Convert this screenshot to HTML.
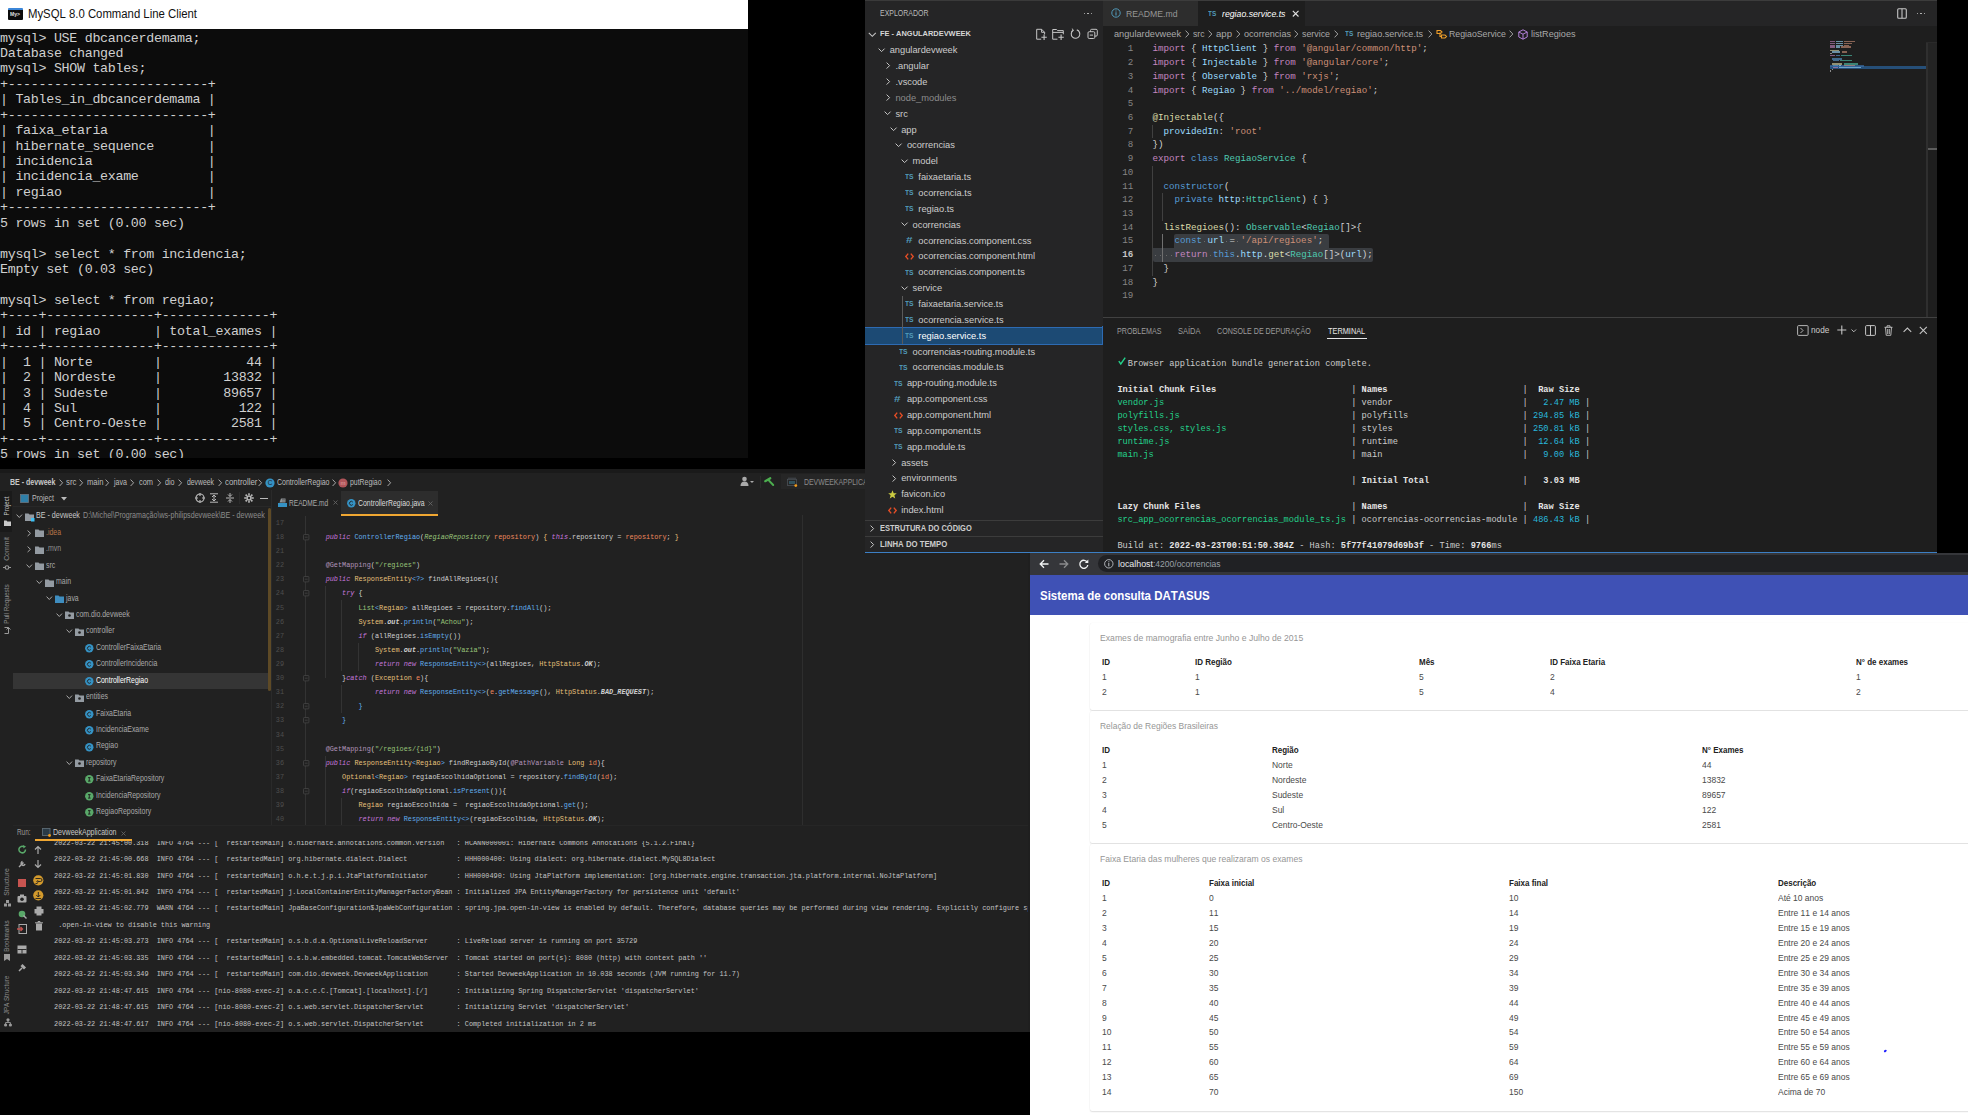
<!DOCTYPE html>
<html><head><meta charset="utf-8">
<style>
*{margin:0;padding:0;box-sizing:border-box}
html,body{width:1968px;height:1115px;overflow:hidden;background:#000}
body{position:relative;font-family:"Liberation Sans",sans-serif;font-kerning:none}
.a{position:absolute}
.t{white-space:pre}
pre{font-family:"Liberation Mono",monospace;white-space:pre;font-kerning:none}
svg{overflow:visible}
</style></head><body>
<div class="a" style="left:0.00px;top:0.00px;width:748.00px;height:29.00px;background:#fff;"></div>
<div class="a" style="left:8.00px;top:8.00px;width:15.00px;height:12.00px;background:#0c0c0c;border-top:2px solid #3b86d8;border-radius:1px"></div>
<div class="a t" style="left:10.00px;top:11.25px;font-size:5px;line-height:6.5px;color:#e0e0e0;font-weight:bold;transform:scaleX(1.0136);transform-origin:0 0;">My&gt;</div>
<div class="a t" style="left:28.00px;top:7.00px;font-size:12.3px;line-height:15.99px;color:#111;transform:scaleX(0.9224);transform-origin:0 0;">MySQL 8.0 Command Line Client</div>
<div class="a" style="left:0.00px;top:29.00px;width:748.00px;height:429.00px;background:#0c0c0c;"></div>
<div class="a" style="left:0;top:29px;width:748px;height:429px;overflow:hidden">
<pre class="a" style="left:0;top:1.5px;font-size:13.33px;letter-spacing:-0.3px;line-height:15.44px;color:#d0d0d0">mysql&gt; USE dbcancerdemama;
Database changed
mysql&gt; SHOW tables;
+--------------------------+
| Tables_in_dbcancerdemama |
+--------------------------+
| faixa_etaria             |
| hibernate_sequence       |
| incidencia               |
| incidencia_exame         |
| regiao                   |
+--------------------------+
5 rows in set (0.00 sec)

mysql&gt; select * from incidencia;
Empty set (0.03 sec)

mysql&gt; select * from regiao;
+----+--------------+--------------+
| id | regiao       | total_exames |
+----+--------------+--------------+
|  1 | Norte        |           44 |
|  2 | Nordeste     |        13832 |
|  3 | Sudeste      |        89657 |
|  4 | Sul          |          122 |
|  5 | Centro-Oeste |         2581 |
+----+--------------+--------------+
5 rows in set (0.00 sec)</pre>
</div>
<div class="a" style="left:0.00px;top:469.00px;width:865.00px;height:84.00px;background:#212121;"></div>
<div class="a" style="left:0.00px;top:553.00px;width:1030.00px;height:479.00px;background:#212121;"></div>
<div class="a" style="left:0.00px;top:469.00px;width:865.00px;height:4.00px;background:#1a1a1a;"></div>
<div class="a t" style="left:9.60px;top:477.05px;font-size:9.0px;line-height:11.7px;color:#c8c8c8;font-weight:bold;transform:scaleX(0.7824);transform-origin:0 0;">BE - devweek</div>
<div class="a t" style="left:66.00px;top:477.05px;font-size:9.0px;line-height:11.7px;color:#bbbbbb;transform:scaleX(0.8752);transform-origin:0 0;">src</div>
<div class="a t" style="left:86.50px;top:477.05px;font-size:9.0px;line-height:11.7px;color:#bbbbbb;transform:scaleX(0.8458);transform-origin:0 0;">main</div>
<div class="a t" style="left:113.50px;top:477.05px;font-size:9.0px;line-height:11.7px;color:#bbbbbb;transform:scaleX(0.7874);transform-origin:0 0;">java</div>
<div class="a t" style="left:138.50px;top:477.05px;font-size:9.0px;line-height:11.7px;color:#bbbbbb;transform:scaleX(0.8234);transform-origin:0 0;">com</div>
<div class="a t" style="left:164.50px;top:477.05px;font-size:9.0px;line-height:11.7px;color:#bbbbbb;transform:scaleX(0.7910);transform-origin:0 0;">dio</div>
<div class="a t" style="left:187.00px;top:477.05px;font-size:9.0px;line-height:11.7px;color:#bbbbbb;transform:scaleX(0.7601);transform-origin:0 0;">devweek</div>
<div class="a t" style="left:225.00px;top:477.05px;font-size:9.0px;line-height:11.7px;color:#bbbbbb;transform:scaleX(0.8780);transform-origin:0 0;">controller</div>
<svg class="a" style="left:58.5px;top:479.2px;" width="5" height="8" viewBox="0 0 5 8"><path d="M0.6 0.6 L3.6 3.8 L0.6 7" stroke="#a8a8a8" stroke-width="1" fill="none"/></svg>
<svg class="a" style="left:79px;top:479.2px;" width="5" height="8" viewBox="0 0 5 8"><path d="M0.6 0.6 L3.6 3.8 L0.6 7" stroke="#a8a8a8" stroke-width="1" fill="none"/></svg>
<svg class="a" style="left:104.5px;top:479.2px;" width="5" height="8" viewBox="0 0 5 8"><path d="M0.6 0.6 L3.6 3.8 L0.6 7" stroke="#a8a8a8" stroke-width="1" fill="none"/></svg>
<svg class="a" style="left:130px;top:479.2px;" width="5" height="8" viewBox="0 0 5 8"><path d="M0.6 0.6 L3.6 3.8 L0.6 7" stroke="#a8a8a8" stroke-width="1" fill="none"/></svg>
<svg class="a" style="left:156.5px;top:479.2px;" width="5" height="8" viewBox="0 0 5 8"><path d="M0.6 0.6 L3.6 3.8 L0.6 7" stroke="#a8a8a8" stroke-width="1" fill="none"/></svg>
<svg class="a" style="left:177.5px;top:479.2px;" width="5" height="8" viewBox="0 0 5 8"><path d="M0.6 0.6 L3.6 3.8 L0.6 7" stroke="#a8a8a8" stroke-width="1" fill="none"/></svg>
<svg class="a" style="left:217.5px;top:479.2px;" width="5" height="8" viewBox="0 0 5 8"><path d="M0.6 0.6 L3.6 3.8 L0.6 7" stroke="#a8a8a8" stroke-width="1" fill="none"/></svg>
<svg class="a" style="left:258px;top:479.2px;" width="5" height="8" viewBox="0 0 5 8"><path d="M0.6 0.6 L3.6 3.8 L0.6 7" stroke="#a8a8a8" stroke-width="1" fill="none"/></svg>
<svg class="a" style="left:332px;top:479.2px;" width="5" height="8" viewBox="0 0 5 8"><path d="M0.6 0.6 L3.6 3.8 L0.6 7" stroke="#a8a8a8" stroke-width="1" fill="none"/></svg>
<svg class="a" style="left:387px;top:479.2px;" width="5" height="8" viewBox="0 0 5 8"><path d="M0.6 0.6 L3.6 3.8 L0.6 7" stroke="#a8a8a8" stroke-width="1" fill="none"/></svg>
<svg class="a" style="left:265px;top:477.8px;" width="10" height="10" viewBox="0 0 10 10"><circle cx="5" cy="5" r="4.6" fill="#3592c4"/><text x="5" y="7.3" font-size="6.5" text-anchor="middle" fill="#1f1f1f" font-family="Liberation Sans">C</text></svg>
<div class="a t" style="left:276.50px;top:477.05px;font-size:9.0px;line-height:11.7px;color:#bbbbbb;transform:scaleX(0.7774);transform-origin:0 0;">ControllerRegiao</div>
<svg class="a" style="left:337.5px;top:477.8px;" width="10" height="10" viewBox="0 0 10 10"><circle cx="5" cy="5" r="4.6" fill="#b0555a"/><text x="5" y="7" font-size="6" text-anchor="middle" fill="#e0a8a8" font-family="Liberation Sans">m</text></svg>
<div class="a t" style="left:349.50px;top:477.05px;font-size:9.0px;line-height:11.7px;color:#bbbbbb;transform:scaleX(0.7677);transform-origin:0 0;">putRegiao</div>
<svg class="a" style="left:740px;top:476px;" width="14" height="11" viewBox="0 0 14 11"><circle cx="4.5" cy="3" r="2.3" fill="#aaa"/><path d="M0.5 10 Q0.5 5.5 4.5 5.5 Q8.5 5.5 8.5 10Z" fill="#aaa"/><path d="M10 5l2 2 2-2z" fill="#aaa"/></svg>
<div class="a" style="left:760.00px;top:476.00px;width:1.00px;height:12.00px;background:#2b2b2b;"></div>
<svg class="a" style="left:764px;top:476px;" width="12" height="11" viewBox="0 0 12 11"><path d="M1.2 5.2 L6.3 2.2" stroke="#4cae4f" stroke-width="2.2" stroke-linecap="round"/><path d="M4.8 4.4 L9.2 9" stroke="#4cae4f" stroke-width="2" stroke-linecap="round"/></svg>
<div class="a" style="left:781.00px;top:473.50px;width:84.00px;height:15.00px;background:#262626;"></div>
<svg class="a" style="left:786.5px;top:477px;" width="11" height="10" viewBox="0 0 11 10"><path d="M1 1.2h8" stroke="#4b5258" stroke-width="0.8"/><rect x="0.5" y="2.3" width="9" height="6.2" stroke="#4b5258" stroke-width="0.8" fill="none"/><rect x="2" y="4" width="6" height="3" fill="#31525e"/><circle cx="8.8" cy="8.6" r="1.4" fill="#f29b18"/></svg>
<div class="a t" style="left:804.00px;top:477.28px;font-size:8.5px;line-height:11.05px;color:#8c8c8c;transform:scaleX(0.8104);transform-origin:0 0;">DEVWEEKAPPLICATION</div>
<div class="a" style="left:0.00px;top:490.50px;width:12.00px;height:41.00px;background:#1a1a1a;"></div>
<div class="a t" style="left:7px;top:506px;width:23.65px;height:10px;font-size:7.6px;line-height:10px;color:#c8c8c8;transform:translate(-50%,-50%) rotate(-90deg) scaleX(0.795)">Project</div>
<div class="a t" style="left:7px;top:549px;width:26.18px;height:10px;font-size:7.6px;line-height:10px;color:#8c8c8c;transform:translate(-50%,-50%) rotate(-90deg) scaleX(0.905)">Commit</div>
<div class="a t" style="left:7px;top:604px;width:46.89px;height:10px;font-size:7.6px;line-height:10px;color:#8c8c8c;transform:translate(-50%,-50%) rotate(-90deg) scaleX(0.845)">Pull Requests</div>
<div class="a t" style="left:7px;top:881.6px;width:30.83px;height:10px;font-size:7.6px;line-height:10px;color:#8c8c8c;transform:translate(-50%,-50%) rotate(-90deg) scaleX(0.895)">Structure</div>
<div class="a t" style="left:7px;top:935.7px;width:38.01px;height:10px;font-size:7.6px;line-height:10px;color:#8c8c8c;transform:translate(-50%,-50%) rotate(-90deg) scaleX(0.829)">Bookmarks</div>
<div class="a t" style="left:7px;top:994.8px;width:46.88px;height:10px;font-size:7.6px;line-height:10px;color:#8c8c8c;transform:translate(-50%,-50%) rotate(-90deg) scaleX(0.821)">JPA Structure</div>
<svg class="a" style="left:3.5px;top:519.5px;" width="7" height="6" viewBox="0 0 7 6"><path d="M0 0.5h2.5l0.8 1h3.7v4.5h-7z" fill="#c8c8c8"/></svg>
<svg class="a" style="left:3px;top:563.5px;" width="8" height="7" viewBox="0 0 8 7"><circle cx="4" cy="3.5" r="1.8" stroke="#9a9a9a" stroke-width="1.1" fill="none"/><path d="M0 3.5h2.2M5.8 3.5h2.2" stroke="#9a9a9a" stroke-width="1.1"/></svg>
<svg class="a" style="left:3.5px;top:626.5px;" width="7" height="7" viewBox="0 0 7 7"><path d="M0.5 0.5h4v6M2.5 2.5l2-2 2 2M0.5 6.5h4" stroke="#9a9a9a" stroke-width="1" fill="none"/></svg>
<svg class="a" style="left:3.5px;top:899.5px;" width="7" height="7" viewBox="0 0 7 7"><rect x="0" y="3.5" width="3" height="3" fill="#9a9a9a"/><rect x="4" y="3.5" width="3" height="3" fill="#9a9a9a"/><rect x="2" y="0" width="3" height="3" fill="#9a9a9a"/></svg>
<svg class="a" style="left:4px;top:954px;" width="6" height="7" viewBox="0 0 6 7"><path d="M0 0h6v7l-3-2-3 2z" fill="#9a9a9a"/></svg>
<svg class="a" style="left:3.5px;top:1018px;" width="8" height="9" viewBox="0 0 8 9"><circle cx="4" cy="1.8" r="1.6" fill="#9a9a9a"/><circle cx="1.6" cy="7" r="1.6" fill="#9a9a9a"/><circle cx="6.4" cy="7" r="1.6" fill="#9a9a9a"/><path d="M4 2v2.5M1.6 7V4.5h4.8V7" stroke="#9a9a9a" stroke-width="0.9" fill="none"/></svg>
<div class="a" style="left:13.00px;top:490.00px;width:259.00px;height:16.00px;background:#212121;"></div>
<div class="a" style="left:13.00px;top:506.00px;width:259.00px;height:1.00px;background:#282828;"></div>
<svg class="a" style="left:20px;top:494px;" width="9" height="9" viewBox="0 0 9 9"><rect x="0.5" y="0.5" width="8" height="8" fill="#2f7fa8" stroke="#6a7680" stroke-width="0.8"/></svg>
<div class="a t" style="left:31.70px;top:493.08px;font-size:8.8px;line-height:11.44px;color:#bbbbbb;transform:scaleX(0.8033);transform-origin:0 0;">Project</div>
<svg class="a" style="left:61px;top:497px;" width="6" height="4" viewBox="0 0 6 4"><path d="M0 0h6l-3 3.5z" fill="#bbbbbb"/></svg>
<svg class="a" style="left:195px;top:493px;" width="10" height="10" viewBox="0 0 10 10"><circle cx="5" cy="5" r="4" stroke="#b8b8b8" stroke-width="1.2" fill="none"/><path d="M5 0v3M5 7v3M0 5h3M7 5h3" stroke="#b8b8b8" stroke-width="1.2"/></svg>
<svg class="a" style="left:210px;top:493px;" width="8" height="10" viewBox="0 0 8 10"><path d="M0 0.8h8M0 9.2h8M4 2v6M2 4l2-2 2 2M2 6l2 2 2-2" stroke="#b8b8b8" stroke-width="1" fill="none"/></svg>
<svg class="a" style="left:226px;top:493px;" width="8" height="10" viewBox="0 0 8 10"><path d="M0 5h8M4 0v3.5M4 6.5v3.5M2 1.5l2 2 2-2M2 8.5l2-2 2 2" stroke="#b8b8b8" stroke-width="1" fill="none"/></svg>
<div class="a" style="left:239.00px;top:492.00px;width:1.00px;height:12.00px;background:#2b2b2b;"></div>
<svg class="a" style="left:244px;top:493px;" width="10" height="10" viewBox="0 0 10 10"><circle cx="5" cy="5" r="2.8" fill="#b8b8b8"/><circle cx="5" cy="5" r="1.2" fill="#212121"/><path d="M8.00 5.00L9.80 5.00M7.12 7.12L8.39 8.39M5.00 8.00L5.00 9.80M2.88 7.12L1.61 8.39M2.00 5.00L0.20 5.00M2.88 2.88L1.61 1.61M5.00 2.00L5.00 0.20M7.12 2.88L8.39 1.61" stroke="#b8b8b8" stroke-width="1.6"/></svg>
<div class="a" style="left:260.00px;top:497.50px;width:8.00px;height:1.50px;background:#b8b8b8;"></div>
<div class="a" style="left:13.00px;top:672.90px;width:258.00px;height:16.50px;background:#353535;"></div>
<svg class="a" style="left:15.9px;top:514.3px;" width="7" height="5" viewBox="0 0 7 5"><path d="M0.6 0.6 L3.3 3.5 L6 0.6" stroke="#a8a8a8" stroke-width="1" fill="none"/></svg>
<svg class="a" style="left:24.9px;top:512.8px;" width="9" height="8" viewBox="0 0 9 8"><path d="M0 0.5h3.5l1 1h4.5v6.5h-9z" fill="#949ba2"/><rect x="6" y="5" width="3.5" height="3.5" fill="#3fc1f5"/></svg>
<div class="a t" style="left:35.90px;top:511.47px;font-size:8.2px;line-height:10.66px;color:#c8c8c8;transform:scaleX(0.8697);transform-origin:0 0;">BE - devweek</div>
<div class="a t" style="left:82.90px;top:511.47px;font-size:8.2px;line-height:10.66px;color:#8c8c8c;transform:scaleX(0.8700);transform-origin:0 0;">D:\Michel\Programação\ws-philipsdevweek\BE - devweek</div>
<svg class="a" style="left:26.8px;top:529.7299999999999px;" width="5" height="7" viewBox="0 0 5 7"><path d="M0.6 0.6 L3.5 3.3 L0.6 6" stroke="#a8a8a8" stroke-width="1" fill="none"/></svg>
<svg class="a" style="left:34.8px;top:529.2299999999999px;" width="9" height="8" viewBox="0 0 9 8"><path d="M0 0.5h3.5l1 1h4.5v6.5h-9z" fill="#949ba2"/></svg>
<div class="a t" style="left:45.85px;top:527.90px;font-size:8.2px;line-height:10.66px;color:#b87548;transform:scaleX(0.8476);transform-origin:0 0;">.idea</div>
<svg class="a" style="left:26.8px;top:546.16px;" width="5" height="7" viewBox="0 0 5 7"><path d="M0.6 0.6 L3.5 3.3 L0.6 6" stroke="#a8a8a8" stroke-width="1" fill="none"/></svg>
<svg class="a" style="left:34.8px;top:545.66px;" width="9" height="8" viewBox="0 0 9 8"><path d="M0 0.5h3.5l1 1h4.5v6.5h-9z" fill="#949ba2"/></svg>
<div class="a t" style="left:45.85px;top:544.33px;font-size:8.2px;line-height:10.66px;color:#8f8f8f;transform:scaleX(0.8476);transform-origin:0 0;">.mvn</div>
<svg class="a" style="left:25.8px;top:563.5899999999999px;" width="7" height="5" viewBox="0 0 7 5"><path d="M0.6 0.6 L3.3 3.5 L6 0.6" stroke="#a8a8a8" stroke-width="1" fill="none"/></svg>
<svg class="a" style="left:34.8px;top:562.0899999999999px;" width="9" height="8" viewBox="0 0 9 8"><path d="M0 0.5h3.5l1 1h4.5v6.5h-9z" fill="#949ba2"/></svg>
<div class="a t" style="left:45.85px;top:560.76px;font-size:8.2px;line-height:10.66px;color:#a9a9a9;transform:scaleX(0.8476);transform-origin:0 0;">src</div>
<svg class="a" style="left:35.8px;top:580.02px;" width="7" height="5" viewBox="0 0 7 5"><path d="M0.6 0.6 L3.3 3.5 L6 0.6" stroke="#a8a8a8" stroke-width="1" fill="none"/></svg>
<svg class="a" style="left:44.8px;top:578.52px;" width="9" height="8" viewBox="0 0 9 8"><path d="M0 0.5h3.5l1 1h4.5v6.5h-9z" fill="#949ba2"/></svg>
<div class="a t" style="left:55.80px;top:577.19px;font-size:8.2px;line-height:10.66px;color:#a9a9a9;transform:scaleX(0.8476);transform-origin:0 0;">main</div>
<svg class="a" style="left:45.8px;top:596.4499999999999px;" width="7" height="5" viewBox="0 0 7 5"><path d="M0.6 0.6 L3.3 3.5 L6 0.6" stroke="#a8a8a8" stroke-width="1" fill="none"/></svg>
<svg class="a" style="left:54.8px;top:594.9499999999999px;" width="9" height="8" viewBox="0 0 9 8"><path d="M0 0.5h3.5l1 1h4.5v6.5h-9z" fill="#3f8dbf"/></svg>
<div class="a t" style="left:65.75px;top:593.62px;font-size:8.2px;line-height:10.66px;color:#a9a9a9;transform:scaleX(0.8476);transform-origin:0 0;">java</div>
<svg class="a" style="left:55.7px;top:612.88px;" width="7" height="5" viewBox="0 0 7 5"><path d="M0.6 0.6 L3.3 3.5 L6 0.6" stroke="#a8a8a8" stroke-width="1" fill="none"/></svg>
<svg class="a" style="left:64.7px;top:611.38px;" width="9" height="8" viewBox="0 0 9 8"><path d="M0 0.5h3.5l1 1h4.5v6.5h-9z" fill="#949ba2"/><circle cx="4.5" cy="4.5" r="1.3" fill="#1f1f1f"/></svg>
<div class="a t" style="left:75.70px;top:610.05px;font-size:8.2px;line-height:10.66px;color:#a9a9a9;transform:scaleX(0.8476);transform-origin:0 0;">com.dio.devweek</div>
<svg class="a" style="left:65.7px;top:629.31px;" width="7" height="5" viewBox="0 0 7 5"><path d="M0.6 0.6 L3.3 3.5 L6 0.6" stroke="#a8a8a8" stroke-width="1" fill="none"/></svg>
<svg class="a" style="left:74.7px;top:627.81px;" width="9" height="8" viewBox="0 0 9 8"><path d="M0 0.5h3.5l1 1h4.5v6.5h-9z" fill="#949ba2"/><circle cx="4.5" cy="4.5" r="1.3" fill="#1f1f1f"/></svg>
<div class="a t" style="left:85.65px;top:626.48px;font-size:8.2px;line-height:10.66px;color:#a9a9a9;transform:scaleX(0.8476);transform-origin:0 0;">controller</div>
<svg class="a" style="left:84.9px;top:643.94px;" width="9" height="9" viewBox="0 0 9 9"><circle cx="4.3" cy="4.3" r="4.2" fill="#3592c4"/><path d="M5.8 3.1 A1.9 1.9 0 1 0 5.8 5.5" stroke="#1f1f1f" stroke-width="0.9" fill="none"/></svg>
<div class="a t" style="left:95.60px;top:642.91px;font-size:8.2px;line-height:10.66px;color:#a9a9a9;transform:scaleX(0.8476);transform-origin:0 0;">ControllerFaixaEtaria</div>
<svg class="a" style="left:84.9px;top:660.37px;" width="9" height="9" viewBox="0 0 9 9"><circle cx="4.3" cy="4.3" r="4.2" fill="#3592c4"/><path d="M5.8 3.1 A1.9 1.9 0 1 0 5.8 5.5" stroke="#1f1f1f" stroke-width="0.9" fill="none"/></svg>
<div class="a t" style="left:95.60px;top:659.34px;font-size:8.2px;line-height:10.66px;color:#a9a9a9;transform:scaleX(0.8476);transform-origin:0 0;">ControllerIncidencia</div>
<svg class="a" style="left:84.9px;top:676.8px;" width="9" height="9" viewBox="0 0 9 9"><circle cx="4.3" cy="4.3" r="4.2" fill="#3592c4"/><path d="M5.8 3.1 A1.9 1.9 0 1 0 5.8 5.5" stroke="#1f1f1f" stroke-width="0.9" fill="none"/></svg>
<div class="a t" style="left:95.60px;top:675.77px;font-size:8.2px;line-height:10.66px;color:#ffffff;transform:scaleX(0.8476);transform-origin:0 0;">ControllerRegiao</div>
<svg class="a" style="left:65.7px;top:695.03px;" width="7" height="5" viewBox="0 0 7 5"><path d="M0.6 0.6 L3.3 3.5 L6 0.6" stroke="#a8a8a8" stroke-width="1" fill="none"/></svg>
<svg class="a" style="left:74.7px;top:693.53px;" width="9" height="8" viewBox="0 0 9 8"><path d="M0 0.5h3.5l1 1h4.5v6.5h-9z" fill="#949ba2"/><circle cx="4.5" cy="4.5" r="1.3" fill="#1f1f1f"/></svg>
<div class="a t" style="left:85.65px;top:692.20px;font-size:8.2px;line-height:10.66px;color:#a9a9a9;transform:scaleX(0.8476);transform-origin:0 0;">entities</div>
<svg class="a" style="left:84.9px;top:709.66px;" width="9" height="9" viewBox="0 0 9 9"><circle cx="4.3" cy="4.3" r="4.2" fill="#3592c4"/><path d="M5.8 3.1 A1.9 1.9 0 1 0 5.8 5.5" stroke="#1f1f1f" stroke-width="0.9" fill="none"/></svg>
<div class="a t" style="left:95.60px;top:708.63px;font-size:8.2px;line-height:10.66px;color:#a9a9a9;transform:scaleX(0.8476);transform-origin:0 0;">FaixaEtaria</div>
<svg class="a" style="left:84.9px;top:726.09px;" width="9" height="9" viewBox="0 0 9 9"><circle cx="4.3" cy="4.3" r="4.2" fill="#3592c4"/><path d="M5.8 3.1 A1.9 1.9 0 1 0 5.8 5.5" stroke="#1f1f1f" stroke-width="0.9" fill="none"/></svg>
<div class="a t" style="left:95.60px;top:725.06px;font-size:8.2px;line-height:10.66px;color:#a9a9a9;transform:scaleX(0.8476);transform-origin:0 0;">IncidenciaExame</div>
<svg class="a" style="left:84.9px;top:742.52px;" width="9" height="9" viewBox="0 0 9 9"><circle cx="4.3" cy="4.3" r="4.2" fill="#3592c4"/><path d="M5.8 3.1 A1.9 1.9 0 1 0 5.8 5.5" stroke="#1f1f1f" stroke-width="0.9" fill="none"/></svg>
<div class="a t" style="left:95.60px;top:741.49px;font-size:8.2px;line-height:10.66px;color:#a9a9a9;transform:scaleX(0.8476);transform-origin:0 0;">Regiao</div>
<svg class="a" style="left:65.7px;top:760.75px;" width="7" height="5" viewBox="0 0 7 5"><path d="M0.6 0.6 L3.3 3.5 L6 0.6" stroke="#a8a8a8" stroke-width="1" fill="none"/></svg>
<svg class="a" style="left:74.7px;top:759.25px;" width="9" height="8" viewBox="0 0 9 8"><path d="M0 0.5h3.5l1 1h4.5v6.5h-9z" fill="#949ba2"/><circle cx="4.5" cy="4.5" r="1.3" fill="#1f1f1f"/></svg>
<div class="a t" style="left:85.65px;top:757.92px;font-size:8.2px;line-height:10.66px;color:#a9a9a9;transform:scaleX(0.8476);transform-origin:0 0;">repository</div>
<svg class="a" style="left:84.9px;top:775.38px;" width="9" height="9" viewBox="0 0 9 9"><circle cx="4.3" cy="4.3" r="4.2" fill="#59a869"/><path d="M3 2.6h2.6M4.3 2.6v3.5M3 6.1h2.6" stroke="#1f1f1f" stroke-width="0.9"/></svg>
<div class="a t" style="left:95.60px;top:774.35px;font-size:8.2px;line-height:10.66px;color:#a9a9a9;transform:scaleX(0.8476);transform-origin:0 0;">FaixaEtariaRepository</div>
<svg class="a" style="left:84.9px;top:791.81px;" width="9" height="9" viewBox="0 0 9 9"><circle cx="4.3" cy="4.3" r="4.2" fill="#59a869"/><path d="M3 2.6h2.6M4.3 2.6v3.5M3 6.1h2.6" stroke="#1f1f1f" stroke-width="0.9"/></svg>
<div class="a t" style="left:95.60px;top:790.78px;font-size:8.2px;line-height:10.66px;color:#a9a9a9;transform:scaleX(0.8476);transform-origin:0 0;">IncidenciaRepository</div>
<svg class="a" style="left:84.9px;top:808.24px;" width="9" height="9" viewBox="0 0 9 9"><circle cx="4.3" cy="4.3" r="4.2" fill="#59a869"/><path d="M3 2.6h2.6M4.3 2.6v3.5M3 6.1h2.6" stroke="#1f1f1f" stroke-width="0.9"/></svg>
<div class="a t" style="left:95.60px;top:807.21px;font-size:8.2px;line-height:10.66px;color:#a9a9a9;transform:scaleX(0.8476);transform-origin:0 0;">RegiaoRepository</div>
<div class="a" style="left:267.50px;top:508.00px;width:3.50px;height:183.00px;background:#5e4a26;border-radius:2px"></div>
<div class="a" style="left:271.00px;top:490.00px;width:1.00px;height:335.00px;background:#2a2a2a;"></div>
<div class="a" style="left:272.00px;top:490.00px;width:593.00px;height:25.00px;background:#212121;"></div>
<svg class="a" style="left:278px;top:497px;" width="10" height="11" viewBox="0 0 10 11"><rect x="0" y="6" width="9" height="4" fill="#3592c4"/><path d="M1.5 5.5L3 1.5h4.5v4" fill="#8f9497"/><path d="M4 2.5h3M4 4h3" stroke="#444" stroke-width="0.5"/></svg>
<div class="a t" style="left:289.00px;top:498.25px;font-size:9.0px;line-height:11.7px;color:#a8a8a8;transform:scaleX(0.7326);transform-origin:0 0;">README.md</div>
<svg class="a" style="left:333px;top:499.5px;" width="5" height="5" viewBox="0 0 5 5"><path d="M0.5 0.5l4 4M4.5 0.5l-4 4" stroke="#6a6a6a" stroke-width="0.8"/></svg>
<div class="a" style="left:341.20px;top:491.00px;width:96.80px;height:22.80px;background:#2d2d2d;"></div>
<div class="a" style="left:341.20px;top:513.80px;width:96.80px;height:2.00px;background:#f0a732;"></div>
<svg class="a" style="left:346.5px;top:498.5px;" width="9" height="9" viewBox="0 0 9 9"><circle cx="4.3" cy="4.3" r="4.2" fill="#3592c4"/><path d="M5.8 3.1 A1.9 1.9 0 1 0 5.8 5.5" stroke="#1f1f1f" stroke-width="0.9" fill="none"/></svg>
<div class="a t" style="left:357.60px;top:498.25px;font-size:9.0px;line-height:11.7px;color:#dcdcdc;transform:scaleX(0.7695);transform-origin:0 0;">ControllerRegiao.java</div>
<svg class="a" style="left:428px;top:500.5px;" width="5" height="5" viewBox="0 0 5 5"><path d="M0.5 0.5l4 4M4.5 0.5l-4 4" stroke="#6a6a6a" stroke-width="0.8"/></svg>
<div class="a" style="left:305.30px;top:515.50px;width:1.00px;height:310.00px;background:#333333;"></div>
<div class="a" style="left:324.64px;top:586.34px;width:1.00px;height:91.78px;background:#333333;"></div>
<div class="a" style="left:341.08px;top:600.46px;width:1.00px;height:70.60px;background:#333333;"></div>
<div class="a" style="left:357.52px;top:642.82px;width:1.00px;height:28.24px;background:#333333;"></div>
<div class="a" style="left:341.08px;top:685.18px;width:1.00px;height:28.24px;background:#333333;"></div>
<div class="a" style="left:324.64px;top:755.78px;width:1.00px;height:70.60px;background:#333333;"></div>
<div class="a" style="left:341.08px;top:798.14px;width:1.00px;height:28.24px;background:#333333;"></div>
<div class="a t" style="left:275.8px;top:515.80px;font:6.85px/14px 'Liberation Mono',monospace;color:#4e4e4e">17</div>
<div class="a t" style="left:275.8px;top:529.92px;font:6.85px/14px 'Liberation Mono',monospace;color:#4e4e4e">18</div>
<svg class="a" style="left:302.8px;top:533.92px;" width="7" height="7" viewBox="0 0 7 7"><rect x="0.5" y="0.5" width="5.4" height="5.4" rx="0.8" stroke="#4a4a4a" stroke-width="0.7" fill="#212121"/><path d="M1.8 3.2h2.8" stroke="#4a4a4a" stroke-width="0.7"/></svg>
<div class="a t" style="left:309.2px;top:529.92px;font:6.85px/14px 'Liberation Mono',monospace"><span style="color:#d0d0d0">    </span><span style="color:#c678dd;font-style:italic">public</span><span style="color:#d0d0d0"> </span><span style="color:#61afef">ControllerRegiao</span><span style="color:#d0d0d0">(</span><span style="color:#98c379;font-style:italic">RegiaoRepository</span><span style="color:#d0d0d0"> </span><span style="color:#ef8a5e">repository</span><span style="color:#d0d0d0">) </span><span style="color:#e5c07b">{</span><span style="color:#d0d0d0"> </span><span style="color:#c678dd;font-style:italic">this</span><span style="color:#d0d0d0">.repository = </span><span style="color:#ef8a5e">repository</span><span style="color:#d0d0d0">; </span><span style="color:#e5c07b">}</span></div>
<div class="a t" style="left:275.8px;top:544.04px;font:6.85px/14px 'Liberation Mono',monospace;color:#4e4e4e">21</div>
<div class="a t" style="left:275.8px;top:558.16px;font:6.85px/14px 'Liberation Mono',monospace;color:#4e4e4e">22</div>
<div class="a t" style="left:309.2px;top:558.16px;font:6.85px/14px 'Liberation Mono',monospace"><span style="color:#d0d0d0">    </span><span style="color:#b294bb">@GetMapping</span><span style="color:#d0d0d0">(</span><span style="color:#98c379">"/regioes"</span><span style="color:#d0d0d0">)</span></div>
<div class="a t" style="left:275.8px;top:572.28px;font:6.85px/14px 'Liberation Mono',monospace;color:#4e4e4e">23</div>
<svg class="a" style="left:302.8px;top:576.28px;" width="7" height="7" viewBox="0 0 7 7"><rect x="0.5" y="0.5" width="5.4" height="5.4" rx="0.8" stroke="#4a4a4a" stroke-width="0.7" fill="#212121"/><path d="M1.8 3.2h2.8" stroke="#4a4a4a" stroke-width="0.7"/></svg>
<div class="a t" style="left:309.2px;top:572.28px;font:6.85px/14px 'Liberation Mono',monospace"><span style="color:#d0d0d0">    </span><span style="color:#c678dd;font-style:italic">public</span><span style="color:#d0d0d0"> </span><span style="color:#e5c07b">ResponseEntity</span><span style="color:#61afef">&lt;?&gt;</span><span style="color:#d0d0d0"> findAllRegioes(){</span></div>
<div class="a t" style="left:275.8px;top:586.40px;font:6.85px/14px 'Liberation Mono',monospace;color:#4e4e4e">24</div>
<svg class="a" style="left:302.8px;top:590.4px;" width="7" height="7" viewBox="0 0 7 7"><rect x="0.5" y="0.5" width="5.4" height="5.4" rx="0.8" stroke="#4a4a4a" stroke-width="0.7" fill="#212121"/><path d="M1.8 3.2h2.8" stroke="#4a4a4a" stroke-width="0.7"/></svg>
<div class="a t" style="left:309.2px;top:586.40px;font:6.85px/14px 'Liberation Mono',monospace"><span style="color:#d0d0d0">        </span><span style="color:#c678dd;font-style:italic">try</span><span style="color:#d0d0d0"> {</span></div>
<div class="a t" style="left:275.8px;top:600.52px;font:6.85px/14px 'Liberation Mono',monospace;color:#4e4e4e">25</div>
<div class="a t" style="left:309.2px;top:600.52px;font:6.85px/14px 'Liberation Mono',monospace"><span style="color:#d0d0d0">            </span><span style="color:#98c379">List</span><span style="color:#61afef">&lt;</span><span style="color:#e5c07b">Regiao</span><span style="color:#61afef">&gt;</span><span style="color:#d0d0d0"> allRegioes = repository.</span><span style="color:#61afef">findAll</span><span style="color:#d0d0d0">();</span></div>
<div class="a t" style="left:275.8px;top:614.64px;font:6.85px/14px 'Liberation Mono',monospace;color:#4e4e4e">26</div>
<div class="a t" style="left:309.2px;top:614.64px;font:6.85px/14px 'Liberation Mono',monospace"><span style="color:#d0d0d0">            </span><span style="color:#e5c07b">System</span><span style="color:#d0d0d0">.</span><span style="color:#d0d0d0;font-style:italic;font-weight:bold">out</span><span style="color:#d0d0d0">.</span><span style="color:#61afef">println</span><span style="color:#d0d0d0">(</span><span style="color:#98c379">"Achou"</span><span style="color:#d0d0d0">);</span></div>
<div class="a t" style="left:275.8px;top:628.76px;font:6.85px/14px 'Liberation Mono',monospace;color:#4e4e4e">27</div>
<div class="a t" style="left:309.2px;top:628.76px;font:6.85px/14px 'Liberation Mono',monospace"><span style="color:#d0d0d0">            </span><span style="color:#c678dd;font-style:italic">if</span><span style="color:#d0d0d0"> (allRegioes.</span><span style="color:#61afef">isEmpty</span><span style="color:#d0d0d0">())</span></div>
<div class="a t" style="left:275.8px;top:642.88px;font:6.85px/14px 'Liberation Mono',monospace;color:#4e4e4e">28</div>
<div class="a t" style="left:309.2px;top:642.88px;font:6.85px/14px 'Liberation Mono',monospace"><span style="color:#d0d0d0">                </span><span style="color:#e5c07b">System</span><span style="color:#d0d0d0">.</span><span style="color:#d0d0d0;font-style:italic;font-weight:bold">out</span><span style="color:#d0d0d0">.</span><span style="color:#61afef">println</span><span style="color:#d0d0d0">(</span><span style="color:#98c379">"Vazia"</span><span style="color:#d0d0d0">);</span></div>
<div class="a t" style="left:275.8px;top:657.00px;font:6.85px/14px 'Liberation Mono',monospace;color:#4e4e4e">29</div>
<div class="a t" style="left:309.2px;top:657.00px;font:6.85px/14px 'Liberation Mono',monospace"><span style="color:#d0d0d0">                </span><span style="color:#c678dd;font-style:italic">return</span><span style="color:#d0d0d0"> </span><span style="color:#c678dd;font-style:italic">new</span><span style="color:#d0d0d0"> </span><span style="color:#61afef">ResponseEntity</span><span style="color:#61afef">&lt;&gt;</span><span style="color:#d0d0d0">(allRegioes, </span><span style="color:#e5c07b">HttpStatus</span><span style="color:#d0d0d0">.</span><span style="color:#d0d0d0;font-style:italic;font-weight:bold">OK</span><span style="color:#d0d0d0">);</span></div>
<div class="a t" style="left:275.8px;top:671.12px;font:6.85px/14px 'Liberation Mono',monospace;color:#4e4e4e">30</div>
<svg class="a" style="left:302.8px;top:675.1199999999999px;" width="7" height="7" viewBox="0 0 7 7"><rect x="0.5" y="0.5" width="5.4" height="5.4" rx="0.8" stroke="#4a4a4a" stroke-width="0.7" fill="#212121"/><path d="M1.8 3.2h2.8" stroke="#4a4a4a" stroke-width="0.7"/></svg>
<div class="a t" style="left:309.2px;top:671.12px;font:6.85px/14px 'Liberation Mono',monospace"><span style="color:#d0d0d0">        }</span><span style="color:#c678dd;font-style:italic">catch</span><span style="color:#d0d0d0"> (</span><span style="color:#e5c07b">Exception</span><span style="color:#d0d0d0"> </span><span style="color:#ef8a5e">e</span><span style="color:#d0d0d0">){</span></div>
<div class="a t" style="left:275.8px;top:685.24px;font:6.85px/14px 'Liberation Mono',monospace;color:#4e4e4e">31</div>
<div class="a t" style="left:309.2px;top:685.24px;font:6.85px/14px 'Liberation Mono',monospace"><span style="color:#d0d0d0">                </span><span style="color:#c678dd;font-style:italic">return</span><span style="color:#d0d0d0"> </span><span style="color:#c678dd;font-style:italic">new</span><span style="color:#d0d0d0"> </span><span style="color:#61afef">ResponseEntity</span><span style="color:#61afef">&lt;&gt;</span><span style="color:#d0d0d0">(</span><span style="color:#ef8a5e">e</span><span style="color:#d0d0d0">.</span><span style="color:#61afef">getMessage</span><span style="color:#d0d0d0">(), </span><span style="color:#e5c07b">HttpStatus</span><span style="color:#d0d0d0">.</span><span style="color:#d0d0d0;font-style:italic;font-weight:bold">BAD_REQUEST</span><span style="color:#d0d0d0">);</span></div>
<div class="a t" style="left:275.8px;top:699.36px;font:6.85px/14px 'Liberation Mono',monospace;color:#4e4e4e">32</div>
<svg class="a" style="left:302.8px;top:703.3599999999999px;" width="7" height="7" viewBox="0 0 7 7"><rect x="0.5" y="0.5" width="5.4" height="5.4" rx="0.8" stroke="#4a4a4a" stroke-width="0.7" fill="#212121"/><path d="M1.8 3.2h2.8" stroke="#4a4a4a" stroke-width="0.7"/></svg>
<div class="a t" style="left:309.2px;top:699.36px;font:6.85px/14px 'Liberation Mono',monospace"><span style="color:#61afef">            }</span></div>
<div class="a t" style="left:275.8px;top:713.48px;font:6.85px/14px 'Liberation Mono',monospace;color:#4e4e4e">33</div>
<svg class="a" style="left:302.8px;top:717.4799999999999px;" width="7" height="7" viewBox="0 0 7 7"><rect x="0.5" y="0.5" width="5.4" height="5.4" rx="0.8" stroke="#4a4a4a" stroke-width="0.7" fill="#212121"/><path d="M1.8 3.2h2.8" stroke="#4a4a4a" stroke-width="0.7"/></svg>
<div class="a t" style="left:309.2px;top:713.48px;font:6.85px/14px 'Liberation Mono',monospace"><span style="color:#61afef">        }</span></div>
<div class="a t" style="left:275.8px;top:727.60px;font:6.85px/14px 'Liberation Mono',monospace;color:#4e4e4e">34</div>
<div class="a t" style="left:275.8px;top:741.72px;font:6.85px/14px 'Liberation Mono',monospace;color:#4e4e4e">35</div>
<div class="a t" style="left:309.2px;top:741.72px;font:6.85px/14px 'Liberation Mono',monospace"><span style="color:#d0d0d0">    </span><span style="color:#b294bb">@GetMapping</span><span style="color:#d0d0d0">(</span><span style="color:#98c379">"/regioes/{id}"</span><span style="color:#d0d0d0">)</span></div>
<div class="a t" style="left:275.8px;top:755.84px;font:6.85px/14px 'Liberation Mono',monospace;color:#4e4e4e">36</div>
<svg class="a" style="left:302.8px;top:759.8399999999999px;" width="7" height="7" viewBox="0 0 7 7"><rect x="0.5" y="0.5" width="5.4" height="5.4" rx="0.8" stroke="#4a4a4a" stroke-width="0.7" fill="#212121"/><path d="M1.8 3.2h2.8" stroke="#4a4a4a" stroke-width="0.7"/></svg>
<div class="a t" style="left:309.2px;top:755.84px;font:6.85px/14px 'Liberation Mono',monospace"><span style="color:#d0d0d0">    </span><span style="color:#c678dd;font-style:italic">public</span><span style="color:#d0d0d0"> </span><span style="color:#e5c07b">ResponseEntity</span><span style="color:#61afef">&lt;</span><span style="color:#e5c07b">Regiao</span><span style="color:#61afef">&gt;</span><span style="color:#d0d0d0"> findRegiaoById(</span><span style="color:#b294bb">@PathVariable</span><span style="color:#d0d0d0"> </span><span style="color:#e5c07b">Long</span><span style="color:#d0d0d0"> </span><span style="color:#ef8a5e">id</span><span style="color:#d0d0d0">){</span></div>
<div class="a t" style="left:275.8px;top:769.96px;font:6.85px/14px 'Liberation Mono',monospace;color:#4e4e4e">37</div>
<div class="a t" style="left:309.2px;top:769.96px;font:6.85px/14px 'Liberation Mono',monospace"><span style="color:#d0d0d0">        </span><span style="color:#e5c07b">Optional</span><span style="color:#61afef">&lt;</span><span style="color:#e5c07b">Regiao</span><span style="color:#61afef">&gt;</span><span style="color:#d0d0d0"> regiaoEscolhidaOptional = repository.</span><span style="color:#61afef">findById</span><span style="color:#d0d0d0">(</span><span style="color:#ef8a5e">id</span><span style="color:#d0d0d0">);</span></div>
<div class="a t" style="left:275.8px;top:784.08px;font:6.85px/14px 'Liberation Mono',monospace;color:#4e4e4e">38</div>
<svg class="a" style="left:302.8px;top:788.0799999999999px;" width="7" height="7" viewBox="0 0 7 7"><rect x="0.5" y="0.5" width="5.4" height="5.4" rx="0.8" stroke="#4a4a4a" stroke-width="0.7" fill="#212121"/><path d="M1.8 3.2h2.8" stroke="#4a4a4a" stroke-width="0.7"/></svg>
<div class="a t" style="left:309.2px;top:784.08px;font:6.85px/14px 'Liberation Mono',monospace"><span style="color:#d0d0d0">        </span><span style="color:#c678dd;font-style:italic">if</span><span style="color:#d0d0d0">(regiaoEscolhidaOptional.</span><span style="color:#61afef">isPresent</span><span style="color:#d0d0d0">()){</span></div>
<div class="a t" style="left:275.8px;top:798.20px;font:6.85px/14px 'Liberation Mono',monospace;color:#4e4e4e">39</div>
<div class="a t" style="left:309.2px;top:798.20px;font:6.85px/14px 'Liberation Mono',monospace"><span style="color:#d0d0d0">            </span><span style="color:#e5c07b">Regiao</span><span style="color:#d0d0d0"> regiaoEscolhida =  regiaoEscolhidaOptional.</span><span style="color:#61afef">get</span><span style="color:#d0d0d0">();</span></div>
<div class="a t" style="left:275.8px;top:812.32px;font:6.85px/14px 'Liberation Mono',monospace;color:#4e4e4e">40</div>
<div class="a t" style="left:309.2px;top:812.32px;font:6.85px/14px 'Liberation Mono',monospace"><span style="color:#d0d0d0">            </span><span style="color:#c678dd;font-style:italic">return</span><span style="color:#d0d0d0"> </span><span style="color:#c678dd;font-style:italic">new</span><span style="color:#d0d0d0"> </span><span style="color:#61afef">ResponseEntity</span><span style="color:#61afef">&lt;&gt;</span><span style="color:#d0d0d0">(regiaoEscolhida, </span><span style="color:#e5c07b">HttpStatus</span><span style="color:#d0d0d0">.</span><span style="color:#d0d0d0;font-style:italic;font-weight:bold">OK</span><span style="color:#d0d0d0">);</span></div>
<div class="a" style="left:802.00px;top:515.00px;width:1.00px;height:310.00px;background:#2e2e2e;"></div>
<div class="a" style="left:13.00px;top:825.00px;width:1017.00px;height:1.00px;background:#262626;"></div>
<div class="a t" style="left:16.50px;top:827.18px;font-size:8.5px;line-height:11.05px;color:#9a9a9a;transform:scaleX(0.7519);transform-origin:0 0;">Run:</div>
<svg class="a" style="left:42px;top:828px;" width="9" height="9" viewBox="0 0 9 9"><rect x="0.5" y="0.5" width="7.5" height="7" stroke="#5c6a74" stroke-width="0.9" fill="#2a3a46"/><circle cx="7.5" cy="7.5" r="1.4" fill="#f29b18"/></svg>
<div class="a t" style="left:53.40px;top:826.98px;font-size:8.8px;line-height:11.44px;color:#c8c8c8;transform:scaleX(0.8013);transform-origin:0 0;">DevweekApplication</div>
<svg class="a" style="left:121.4px;top:830.5px;" width="5" height="5" viewBox="0 0 5 5"><path d="M0.5 0.5l4 4M4.5 0.5l-4 4" stroke="#6a6a6a" stroke-width="0.8"/></svg>
<div class="a" style="left:34.80px;top:839.00px;width:97.20px;height:2.00px;background:#f0a732;"></div>
<div class="a" style="left:0;top:841px;width:1030px;height:191px;overflow:hidden">
<div class="a t" style="left:54.1px;top:-5.40px;font:6.85px/14px 'Liberation Mono',monospace;color:#c4c4c4">2022-03-22 21:45:00.318  INFO 4764 --- [  restartedMain] o.hibernate.annotations.common.Version   : HCANN000001: Hibernate Commons Annotations {5.1.2.Final}</div>
<div class="a t" style="left:54.1px;top:11.05px;font:6.85px/14px 'Liberation Mono',monospace;color:#c4c4c4">2022-03-22 21:45:00.668  INFO 4764 --- [  restartedMain] org.hibernate.dialect.Dialect            : HHH000400: Using dialect: org.hibernate.dialect.MySQL8Dialect</div>
<div class="a t" style="left:54.1px;top:27.50px;font:6.85px/14px 'Liberation Mono',monospace;color:#c4c4c4">2022-03-22 21:45:01.830  INFO 4764 --- [  restartedMain] o.h.e.t.j.p.i.JtaPlatformInitiator       : HHH000490: Using JtaPlatform implementation: [org.hibernate.engine.transaction.jta.platform.internal.NoJtaPlatform]</div>
<div class="a t" style="left:54.1px;top:43.95px;font:6.85px/14px 'Liberation Mono',monospace;color:#c4c4c4">2022-03-22 21:45:01.842  INFO 4764 --- [  restartedMain] j.LocalContainerEntityManagerFactoryBean : Initialized JPA EntityManagerFactory for persistence unit 'default'</div>
<div class="a t" style="left:54.1px;top:60.40px;font:6.85px/14px 'Liberation Mono',monospace;color:#c4c4c4">2022-03-22 21:45:02.779  WARN 4764 --- [  restartedMain] JpaBaseConfiguration$JpaWebConfiguration : spring.jpa.open-in-view is enabled by default. Therefore, database queries may be performed during view rendering. Explicitly configure spring</div>
<div class="a t" style="left:54.1px;top:76.85px;font:6.85px/14px 'Liberation Mono',monospace;color:#c4c4c4"> .open-in-view to disable this warning</div>
<div class="a t" style="left:54.1px;top:93.30px;font:6.85px/14px 'Liberation Mono',monospace;color:#c4c4c4">2022-03-22 21:45:03.273  INFO 4764 --- [  restartedMain] o.s.b.d.a.OptionalLiveReloadServer       : LiveReload server is running on port 35729</div>
<div class="a t" style="left:54.1px;top:109.75px;font:6.85px/14px 'Liberation Mono',monospace;color:#c4c4c4">2022-03-22 21:45:03.335  INFO 4764 --- [  restartedMain] o.s.b.w.embedded.tomcat.TomcatWebServer  : Tomcat started on port(s): 8080 (http) with context path ''</div>
<div class="a t" style="left:54.1px;top:126.20px;font:6.85px/14px 'Liberation Mono',monospace;color:#c4c4c4">2022-03-22 21:45:03.349  INFO 4764 --- [  restartedMain] com.dio.devweek.DevweekApplication       : Started DevweekApplication in 10.038 seconds (JVM running for 11.7)</div>
<div class="a t" style="left:54.1px;top:142.65px;font:6.85px/14px 'Liberation Mono',monospace;color:#c4c4c4">2022-03-22 21:48:47.615  INFO 4764 --- [nio-8080-exec-2] o.a.c.c.C.[Tomcat].[localhost].[/]       : Initializing Spring DispatcherServlet 'dispatcherServlet'</div>
<div class="a t" style="left:54.1px;top:159.10px;font:6.85px/14px 'Liberation Mono',monospace;color:#c4c4c4">2022-03-22 21:48:47.615  INFO 4764 --- [nio-8080-exec-2] o.s.web.servlet.DispatcherServlet        : Initializing Servlet 'dispatcherServlet'</div>
<div class="a t" style="left:54.1px;top:175.55px;font:6.85px/14px 'Liberation Mono',monospace;color:#c4c4c4">2022-03-22 21:48:47.617  INFO 4764 --- [nio-8080-exec-2] o.s.web.servlet.DispatcherServlet        : Completed initialization in 2 ms</div>
</div>
<svg class="a" style="left:17.5px;top:845px;" width="9" height="9" viewBox="0 0 9 9"><path d="M7.5 4.5 A3.3 3.3 0 1 1 6 1.8" stroke="#59a869" stroke-width="1.5" fill="none"/><path d="M5 0l3 1.5-2.5 2z" fill="#59a869"/></svg>
<svg class="a" style="left:17.5px;top:858.5px;" width="9" height="9" viewBox="0 0 9 9"><path d="M1 8l4.5-4.5M4.5 2.5a2 2 0 1 0 2.5 2.5" stroke="#aaa" stroke-width="1.4" fill="none"/></svg>
<div class="a" style="left:18.00px;top:879.00px;width:8.00px;height:8.00px;background:#c75450;"></div>
<svg class="a" style="left:17px;top:894px;" width="10" height="9" viewBox="0 0 10 9"><rect x="0.5" y="2" width="9" height="6.5" rx="1" fill="#aaa"/><circle cx="5" cy="5.2" r="1.8" fill="#1f1f1f"/><rect x="3" y="0.5" width="4" height="2" fill="#aaa"/></svg>
<svg class="a" style="left:17px;top:909px;" width="10" height="10" viewBox="0 0 10 10"><circle cx="5" cy="5" r="3.3" fill="#59a869"/><path d="M6.5 6.5l3 3" stroke="#aaa" stroke-width="1.4"/></svg>
<svg class="a" style="left:17px;top:924px;" width="10" height="10" viewBox="0 0 10 10"><rect x="2" y="0.5" width="7.5" height="9" stroke="#aaa" stroke-width="1" fill="none"/><path d="M0 5h5.5M3.5 3l2 2-2 2" stroke="#c75450" stroke-width="1.3" fill="none"/></svg>
<svg class="a" style="left:17px;top:944.5px;" width="10" height="9" viewBox="0 0 10 9"><rect x="0.5" y="0.5" width="9" height="8" fill="#aaa"/><path d="M0.5 4.5h9M5 4.5v4" stroke="#1f1f1f" stroke-width="0.9"/></svg>
<svg class="a" style="left:17px;top:963px;" width="10" height="10" viewBox="0 0 10 10"><path d="M2 8l3-3M4 2.5l3.5 3.5M5 1.5l3.5 3.5" stroke="#aaa" stroke-width="1.5"/></svg>
<svg class="a" style="left:34px;top:845px;" width="8" height="9" viewBox="0 0 8 9"><path d="M4 9V1.5M1 4.5l3-3 3 3" stroke="#aaa" stroke-width="1.2" fill="none"/></svg>
<svg class="a" style="left:34px;top:860px;" width="8" height="9" viewBox="0 0 8 9"><path d="M4 0v7.5M1 4.5l3 3 3-3" stroke="#aaa" stroke-width="1.2" fill="none"/></svg>
<svg class="a" style="left:33px;top:874.5px;" width="11" height="11" viewBox="0 0 11 11"><circle cx="5.3" cy="5.3" r="5.1" fill="#d39a2c"/><path d="M2.5 3.5h5a1.5 1.5 0 0 1 0 3h-3M5 5.2l-1.2 1.3 1.2 1.3M2.5 8.5h2" stroke="#1f1f1f" stroke-width="0.9" fill="none"/></svg>
<svg class="a" style="left:33px;top:890px;" width="11" height="11" viewBox="0 0 11 11"><circle cx="5.3" cy="5.3" r="5.1" fill="#d39a2c"/><path d="M5.3 2v5M3.3 5l2 2 2-2M2.5 8.5h5.6" stroke="#1f1f1f" stroke-width="0.9" fill="none"/></svg>
<svg class="a" style="left:33.5px;top:906px;" width="10" height="10" viewBox="0 0 10 10"><rect x="0.5" y="3" width="9" height="4.5" fill="#aaa"/><rect x="2.5" y="0.5" width="5" height="2.5" fill="#aaa"/><rect x="2.5" y="7" width="5" height="2.5" fill="#aaa"/></svg>
<svg class="a" style="left:34.5px;top:921px;" width="8" height="10" viewBox="0 0 8 10"><path d="M0 1.8h8M3 1.8v-1.3h2v1.3" stroke="#aaa" stroke-width="1" fill="none"/><rect x="1" y="2.5" width="6" height="7" fill="#aaa"/></svg>
<div class="a" style="left:865.00px;top:0.00px;width:1072.00px;height:553.00px;background:#1e1e1e;"></div>
<div class="a" style="left:865.00px;top:0.00px;width:238.00px;height:553.00px;background:#252526;"></div>
<div class="a" style="left:865.00px;top:0.00px;width:1072.00px;height:1.00px;background:#3a3a3a;"></div>
<div class="a t" style="left:879.50px;top:8.11px;font-size:8.3px;line-height:10.79px;color:#bbbbbb;transform:scaleX(0.8412);transform-origin:0 0;">EXPLORADOR</div>
<div class="a" style="left:1083.50px;top:12.50px;width:1.60px;height:1.60px;background:#c5c5c5;border-radius:1px"></div>
<div class="a" style="left:1087.10px;top:12.50px;width:1.60px;height:1.60px;background:#c5c5c5;border-radius:1px"></div>
<div class="a" style="left:1090.70px;top:12.50px;width:1.60px;height:1.60px;background:#c5c5c5;border-radius:1px"></div>
<svg class="a" style="left:868px;top:32px;" width="9" height="6" viewBox="0 0 9 6"><path d="M0.8 0.8 L4.3 4.3 L7.8 0.8" stroke="#c5c5c5" stroke-width="1.1" fill="none"/></svg>
<div class="a t" style="left:879.50px;top:28.73px;font-size:8.1px;line-height:10.53px;color:#d6d6d6;font-weight:bold;transform:scaleX(0.9192);transform-origin:0 0;">FE - ANGULARDEVWEEK</div>
<svg class="a" style="left:1036px;top:28px;" width="13" height="13" viewBox="0 0 13 13"><path d="M5.2 11.2H0.7V1.3H5.6L8.6 4.3V6.3M5.6 1.3V4.3H8.6" stroke="#c5c5c5" stroke-width="1" fill="none"/><path d="M8.1 6.6V11.9M5.4 9.2H10.8" stroke="#c5c5c5" stroke-width="1.1"/></svg>
<svg class="a" style="left:1052px;top:28px;" width="13" height="13" viewBox="0 0 13 13"><path d="M5.4 11.2H0.7V1.5H4.6L5.6 2.6H11.3V6.3M0.7 4.4H11.3" stroke="#c5c5c5" stroke-width="1" fill="none"/><path d="M9.1 6.6V11.9M6.4 9.2H11.8" stroke="#c5c5c5" stroke-width="1.1"/></svg>
<svg class="a" style="left:1069px;top:28px;" width="13" height="13" viewBox="0 0 13 13"><path d="M4.2 2.4A4.3 4.3 0 1 0 7.8 1.9" stroke="#c5c5c5" stroke-width="1.1" fill="none"/><path d="M3.3 0.6L4.3 2.6L2.3 3.4" stroke="#c5c5c5" stroke-width="1" fill="none"/></svg>
<svg class="a" style="left:1087px;top:28px;" width="13" height="13" viewBox="0 0 13 13"><rect x="3.5" y="1.3" width="6.8" height="6.8" rx="1.2" stroke="#c5c5c5" stroke-width="1" fill="none"/><rect x="1" y="3.7" width="6.8" height="6.8" rx="1.2" stroke="#c5c5c5" stroke-width="1" fill="#252526"/><path d="M2.8 7.1H6" stroke="#c5c5c5" stroke-width="1"/></svg>
<div class="a" style="left:865.00px;top:327.18px;width:238.00px;height:17.80px;background:#1c4a74;border-top:1.2px solid #2d6bb3;border-bottom:1.2px solid #2d6bb3"></div>
<div class="a" style="left:902.00px;top:296.06px;width:1.00px;height:47.58px;background:#5a5a5a;"></div>
<svg class="a" style="left:878.2px;top:47.8px;" width="8" height="5" viewBox="0 0 8 5"><path d="M0.6 0.6 L3.6 3.6 L6.6 0.6" stroke="#c5c5c5" stroke-width="1" fill="none"/></svg>
<div class="a t" style="left:889.70px;top:44.25px;font-size:9.3px;line-height:12.09px;color:#cccccc;">angulardevweek</div>
<svg class="a" style="left:885.9px;top:62.36px;" width="5" height="8" viewBox="0 0 5 8"><path d="M0.6 0.6 L3.6 3.6 L0.6 6.6" stroke="#c5c5c5" stroke-width="1" fill="none"/></svg>
<div class="a t" style="left:895.43px;top:60.11px;font-size:9.3px;line-height:12.09px;color:#cccccc;">.angular</div>
<svg class="a" style="left:885.9px;top:78.22px;" width="5" height="8" viewBox="0 0 5 8"><path d="M0.6 0.6 L3.6 3.6 L0.6 6.6" stroke="#c5c5c5" stroke-width="1" fill="none"/></svg>
<div class="a t" style="left:895.43px;top:75.97px;font-size:9.3px;line-height:12.09px;color:#cccccc;">.vscode</div>
<svg class="a" style="left:885.9px;top:94.08px;" width="5" height="8" viewBox="0 0 5 8"><path d="M0.6 0.6 L3.6 3.6 L0.6 6.6" stroke="#c5c5c5" stroke-width="1" fill="none"/></svg>
<div class="a t" style="left:895.43px;top:91.83px;font-size:9.3px;line-height:12.09px;color:#8c8c8c;">node_modules</div>
<svg class="a" style="left:883.9px;top:111.24px;" width="8" height="5" viewBox="0 0 8 5"><path d="M0.6 0.6 L3.6 3.6 L6.6 0.6" stroke="#c5c5c5" stroke-width="1" fill="none"/></svg>
<div class="a t" style="left:895.43px;top:107.69px;font-size:9.3px;line-height:12.09px;color:#cccccc;">src</div>
<svg class="a" style="left:889.7px;top:127.1px;" width="8" height="5" viewBox="0 0 8 5"><path d="M0.6 0.6 L3.6 3.6 L6.6 0.6" stroke="#c5c5c5" stroke-width="1" fill="none"/></svg>
<div class="a t" style="left:901.16px;top:123.55px;font-size:9.3px;line-height:12.09px;color:#cccccc;">app</div>
<svg class="a" style="left:895.4px;top:142.95999999999998px;" width="8" height="5" viewBox="0 0 8 5"><path d="M0.6 0.6 L3.6 3.6 L6.6 0.6" stroke="#c5c5c5" stroke-width="1" fill="none"/></svg>
<div class="a t" style="left:906.89px;top:139.41px;font-size:9.3px;line-height:12.09px;color:#cccccc;">ocorrencias</div>
<svg class="a" style="left:901.1px;top:158.82px;" width="8" height="5" viewBox="0 0 8 5"><path d="M0.6 0.6 L3.6 3.6 L6.6 0.6" stroke="#c5c5c5" stroke-width="1" fill="none"/></svg>
<div class="a t" style="left:912.62px;top:155.28px;font-size:9.3px;line-height:12.09px;color:#cccccc;">model</div>
<div class="a t" style="left:905.15px;top:172.43px;font-size:7.0px;line-height:9.1px;color:#519aba;font-weight:bold;transform:scaleX(0.9614);transform-origin:0 0;">TS</div>
<div class="a t" style="left:918.35px;top:171.14px;font-size:9.3px;line-height:12.09px;color:#cccccc;">faixaetaria.ts</div>
<div class="a t" style="left:905.15px;top:188.29px;font-size:7.0px;line-height:9.1px;color:#519aba;font-weight:bold;transform:scaleX(0.9614);transform-origin:0 0;">TS</div>
<div class="a t" style="left:918.35px;top:187.00px;font-size:9.3px;line-height:12.09px;color:#cccccc;">ocorrencia.ts</div>
<div class="a t" style="left:905.15px;top:204.15px;font-size:7.0px;line-height:9.1px;color:#519aba;font-weight:bold;transform:scaleX(0.9614);transform-origin:0 0;">TS</div>
<div class="a t" style="left:918.35px;top:202.85px;font-size:9.3px;line-height:12.09px;color:#cccccc;">regiao.ts</div>
<svg class="a" style="left:901.1px;top:222.26px;" width="8" height="5" viewBox="0 0 8 5"><path d="M0.6 0.6 L3.6 3.6 L6.6 0.6" stroke="#c5c5c5" stroke-width="1" fill="none"/></svg>
<div class="a t" style="left:912.62px;top:218.72px;font-size:9.3px;line-height:12.09px;color:#cccccc;">ocorrencias</div>
<div class="a t" style="left:905.85px;top:235.09px;font-size:8.5px;line-height:11.05px;color:#519aba;font-weight:bold;transform:scaleX(1.3750);transform-origin:0 0;">#</div>
<div class="a t" style="left:918.35px;top:234.58px;font-size:9.3px;line-height:12.09px;color:#cccccc;">ocorrencias.component.css</div>
<svg class="a" style="left:905.4px;top:252.98000000000002px;" width="9" height="7" viewBox="0 0 9 7"><path d="M3.2 0.6 L0.8 3.5 L3.2 6.4 M5.8 0.6 L8.2 3.5 L5.8 6.4" stroke="#e44d26" stroke-width="1.4" fill="none"/></svg>
<div class="a t" style="left:918.35px;top:250.44px;font-size:9.3px;line-height:12.09px;color:#cccccc;">ocorrencias.component.html</div>
<div class="a t" style="left:905.15px;top:267.59px;font-size:7.0px;line-height:9.1px;color:#519aba;font-weight:bold;transform:scaleX(0.9614);transform-origin:0 0;">TS</div>
<div class="a t" style="left:918.35px;top:266.29px;font-size:9.3px;line-height:12.09px;color:#cccccc;">ocorrencias.component.ts</div>
<svg class="a" style="left:901.1px;top:285.7px;" width="8" height="5" viewBox="0 0 8 5"><path d="M0.6 0.6 L3.6 3.6 L6.6 0.6" stroke="#c5c5c5" stroke-width="1" fill="none"/></svg>
<div class="a t" style="left:912.62px;top:282.15px;font-size:9.3px;line-height:12.09px;color:#cccccc;">service</div>
<div class="a t" style="left:905.15px;top:299.31px;font-size:7.0px;line-height:9.1px;color:#519aba;font-weight:bold;transform:scaleX(0.9614);transform-origin:0 0;">TS</div>
<div class="a t" style="left:918.35px;top:298.01px;font-size:9.3px;line-height:12.09px;color:#cccccc;">faixaetaria.service.ts</div>
<div class="a t" style="left:905.15px;top:315.17px;font-size:7.0px;line-height:9.1px;color:#519aba;font-weight:bold;transform:scaleX(0.9614);transform-origin:0 0;">TS</div>
<div class="a t" style="left:918.35px;top:313.88px;font-size:9.3px;line-height:12.09px;color:#cccccc;">ocorrencia.service.ts</div>
<div class="a t" style="left:905.15px;top:331.03px;font-size:7.0px;line-height:9.1px;color:#519aba;font-weight:bold;transform:scaleX(0.9614);transform-origin:0 0;">TS</div>
<div class="a t" style="left:918.35px;top:329.74px;font-size:9.3px;line-height:12.09px;color:#ffffff;">regiao.service.ts</div>
<div class="a t" style="left:899.42px;top:346.89px;font-size:7.0px;line-height:9.1px;color:#519aba;font-weight:bold;transform:scaleX(0.9614);transform-origin:0 0;">TS</div>
<div class="a t" style="left:912.62px;top:345.59px;font-size:9.3px;line-height:12.09px;color:#cccccc;">ocorrencias-routing.module.ts</div>
<div class="a t" style="left:899.42px;top:362.75px;font-size:7.0px;line-height:9.1px;color:#519aba;font-weight:bold;transform:scaleX(0.9614);transform-origin:0 0;">TS</div>
<div class="a t" style="left:912.62px;top:361.45px;font-size:9.3px;line-height:12.09px;color:#cccccc;">ocorrencias.module.ts</div>
<div class="a t" style="left:893.69px;top:378.61px;font-size:7.0px;line-height:9.1px;color:#519aba;font-weight:bold;transform:scaleX(0.9614);transform-origin:0 0;">TS</div>
<div class="a t" style="left:906.89px;top:377.31px;font-size:9.3px;line-height:12.09px;color:#cccccc;">app-routing.module.ts</div>
<div class="a t" style="left:894.39px;top:393.69px;font-size:8.5px;line-height:11.05px;color:#519aba;font-weight:bold;transform:scaleX(1.3750);transform-origin:0 0;">#</div>
<div class="a t" style="left:906.89px;top:393.17px;font-size:9.3px;line-height:12.09px;color:#cccccc;">app.component.css</div>
<svg class="a" style="left:893.9px;top:411.58px;" width="9" height="7" viewBox="0 0 9 7"><path d="M3.2 0.6 L0.8 3.5 L3.2 6.4 M5.8 0.6 L8.2 3.5 L5.8 6.4" stroke="#e44d26" stroke-width="1.4" fill="none"/></svg>
<div class="a t" style="left:906.89px;top:409.03px;font-size:9.3px;line-height:12.09px;color:#cccccc;">app.component.html</div>
<div class="a t" style="left:893.69px;top:426.19px;font-size:7.0px;line-height:9.1px;color:#519aba;font-weight:bold;transform:scaleX(0.9614);transform-origin:0 0;">TS</div>
<div class="a t" style="left:906.89px;top:424.89px;font-size:9.3px;line-height:12.09px;color:#cccccc;">app.component.ts</div>
<div class="a t" style="left:893.69px;top:442.05px;font-size:7.0px;line-height:9.1px;color:#519aba;font-weight:bold;transform:scaleX(0.9614);transform-origin:0 0;">TS</div>
<div class="a t" style="left:906.89px;top:440.75px;font-size:9.3px;line-height:12.09px;color:#cccccc;">app.module.ts</div>
<svg class="a" style="left:891.7px;top:458.86px;" width="5" height="8" viewBox="0 0 5 8"><path d="M0.6 0.6 L3.6 3.6 L0.6 6.6" stroke="#c5c5c5" stroke-width="1" fill="none"/></svg>
<div class="a t" style="left:901.16px;top:456.62px;font-size:9.3px;line-height:12.09px;color:#cccccc;">assets</div>
<svg class="a" style="left:891.7px;top:474.71999999999997px;" width="5" height="8" viewBox="0 0 5 8"><path d="M0.6 0.6 L3.6 3.6 L0.6 6.6" stroke="#c5c5c5" stroke-width="1" fill="none"/></svg>
<div class="a t" style="left:901.16px;top:472.47px;font-size:9.3px;line-height:12.09px;color:#cccccc;">environments</div>
<svg class="a" style="left:887.7px;top:489.88px;" width="9" height="9" viewBox="0 0 9 9"><path d="M4.5 0.3 L5.7 3.2 L8.8 3.3 L6.4 5.3 L7.2 8.5 L4.5 6.7 L1.8 8.5 L2.6 5.3 L0.2 3.3 L3.3 3.2 Z" fill="#cbcb41"/></svg>
<div class="a t" style="left:901.16px;top:488.33px;font-size:9.3px;line-height:12.09px;color:#cccccc;">favicon.ico</div>
<svg class="a" style="left:888.2px;top:506.74px;" width="9" height="7" viewBox="0 0 9 7"><path d="M3.2 0.6 L0.8 3.5 L3.2 6.4 M5.8 0.6 L8.2 3.5 L5.8 6.4" stroke="#e44d26" stroke-width="1.4" fill="none"/></svg>
<div class="a t" style="left:901.16px;top:504.19px;font-size:9.3px;line-height:12.09px;color:#cccccc;">index.html</div>
<div class="a" style="left:865.00px;top:520.00px;width:238.00px;height:1.00px;background:#3c3c3c;"></div>
<svg class="a" style="left:869.5px;top:524.5px;" width="5" height="8" viewBox="0 0 5 8"><path d="M0.6 0.6 L3.6 3.6 L0.6 6.6" stroke="#c5c5c5" stroke-width="1" fill="none"/></svg>
<div class="a t" style="left:879.50px;top:523.01px;font-size:8.9px;line-height:11.57px;color:#cccccc;font-weight:bold;transform:scaleX(0.8419);transform-origin:0 0;">ESTRUTURA DO CÓDIGO</div>
<div class="a" style="left:865.00px;top:536.00px;width:238.00px;height:1.00px;background:#3c3c3c;"></div>
<svg class="a" style="left:869.5px;top:540.5px;" width="5" height="8" viewBox="0 0 5 8"><path d="M0.6 0.6 L3.6 3.6 L0.6 6.6" stroke="#c5c5c5" stroke-width="1" fill="none"/></svg>
<div class="a t" style="left:879.50px;top:538.72px;font-size:8.9px;line-height:11.57px;color:#cccccc;font-weight:bold;transform:scaleX(0.8751);transform-origin:0 0;">LINHA DO TEMPO</div>
<div class="a" style="left:865.00px;top:552.00px;width:1072.00px;height:1.00px;background:#3c7fc4;"></div>
<div class="a" style="left:1103.00px;top:0.00px;width:834.00px;height:26.00px;background:#252526;"></div>
<div class="a" style="left:1103.00px;top:1.00px;width:95.00px;height:25.00px;background:#2d2d2d;"></div>
<div class="a" style="left:1198.00px;top:1.00px;width:107.00px;height:25.00px;background:#1e1e1e;"></div>
<div class="a" style="left:1103.00px;top:0.00px;width:834.00px;height:1.20px;background:#3c3c3c;"></div>
<svg class="a" style="left:1111px;top:8px;" width="10" height="10" viewBox="0 0 10 10"><circle cx="5" cy="5" r="4.2" stroke="#519aba" stroke-width="1" fill="none"/><path d="M5 4.2v3.3M5 2.6v0.9" stroke="#519aba" stroke-width="1.1"/></svg>
<div class="a t" style="left:1125.80px;top:7.96px;font-size:9.3px;line-height:12.09px;color:#969696;transform:scaleX(0.9332);transform-origin:0 0;">README.md</div>
<div class="a t" style="left:1208.30px;top:9.05px;font-size:7.0px;line-height:9.1px;color:#519aba;font-weight:bold;transform:scaleX(0.9167);transform-origin:0 0;">TS</div>
<div class="a t" style="left:1221.90px;top:7.96px;font-size:9.3px;line-height:12.09px;color:#ffffff;font-style:italic;transform:scaleX(0.9378);transform-origin:0 0;">regiao.service.ts</div>
<svg class="a" style="left:1291.5px;top:9.5px;" width="8" height="8" viewBox="0 0 8 8"><path d="M0.8 0.8L6.5 6.5M6.5 0.8L0.8 6.5" stroke="#e0e0e0" stroke-width="1.1"/></svg>
<svg class="a" style="left:1897px;top:8px;" width="10" height="11" viewBox="0 0 10 11"><rect x="0.7" y="0.7" width="8.6" height="9.6" rx="1" stroke="#c5c5c5" stroke-width="1.1" fill="none"/><path d="M5 0.7v9.6" stroke="#c5c5c5" stroke-width="1.1"/></svg>
<div class="a" style="left:1916.50px;top:12.80px;width:1.60px;height:1.60px;background:#c5c5c5;border-radius:1px"></div>
<div class="a" style="left:1920.00px;top:12.80px;width:1.60px;height:1.60px;background:#c5c5c5;border-radius:1px"></div>
<div class="a" style="left:1923.50px;top:12.80px;width:1.60px;height:1.60px;background:#c5c5c5;border-radius:1px"></div>
<div class="a t" style="left:1114.20px;top:27.75px;font-size:9.3px;line-height:12.09px;color:#a9a9a9;transform:scaleX(0.9892);transform-origin:0 0;">angulardevweek</div>
<div class="a t" style="left:1193.00px;top:27.75px;font-size:9.3px;line-height:12.09px;color:#a9a9a9;transform:scaleX(0.9276);transform-origin:0 0;">src</div>
<div class="a t" style="left:1216.00px;top:27.75px;font-size:9.3px;line-height:12.09px;color:#a9a9a9;transform:scaleX(1.0312);transform-origin:0 0;">app</div>
<div class="a t" style="left:1244.00px;top:27.75px;font-size:9.3px;line-height:12.09px;color:#a9a9a9;transform:scaleX(0.9777);transform-origin:0 0;">ocorrencias</div>
<div class="a t" style="left:1302.00px;top:27.75px;font-size:9.3px;line-height:12.09px;color:#a9a9a9;transform:scaleX(0.9505);transform-origin:0 0;">service</div>
<svg class="a" style="left:1185.3px;top:29.6px;" width="5" height="9" viewBox="0 0 5 9"><path d="M0.6 0.6 L3.8 4 L0.6 7.4" stroke="#a0a0a0" stroke-width="1" fill="none"/></svg>
<svg class="a" style="left:1208.3px;top:29.6px;" width="5" height="9" viewBox="0 0 5 9"><path d="M0.6 0.6 L3.8 4 L0.6 7.4" stroke="#a0a0a0" stroke-width="1" fill="none"/></svg>
<svg class="a" style="left:1236.3px;top:29.6px;" width="5" height="9" viewBox="0 0 5 9"><path d="M0.6 0.6 L3.8 4 L0.6 7.4" stroke="#a0a0a0" stroke-width="1" fill="none"/></svg>
<svg class="a" style="left:1294.3px;top:29.6px;" width="5" height="9" viewBox="0 0 5 9"><path d="M0.6 0.6 L3.8 4 L0.6 7.4" stroke="#a0a0a0" stroke-width="1" fill="none"/></svg>
<svg class="a" style="left:1334.3px;top:29.6px;" width="5" height="9" viewBox="0 0 5 9"><path d="M0.6 0.6 L3.8 4 L0.6 7.4" stroke="#a0a0a0" stroke-width="1" fill="none"/></svg>
<svg class="a" style="left:1428.3px;top:29.6px;" width="5" height="9" viewBox="0 0 5 9"><path d="M0.6 0.6 L3.8 4 L0.6 7.4" stroke="#a0a0a0" stroke-width="1" fill="none"/></svg>
<svg class="a" style="left:1509.3px;top:29.6px;" width="5" height="9" viewBox="0 0 5 9"><path d="M0.6 0.6 L3.8 4 L0.6 7.4" stroke="#a0a0a0" stroke-width="1" fill="none"/></svg>
<div class="a t" style="left:1345.00px;top:28.85px;font-size:7.0px;line-height:9.1px;color:#519aba;font-weight:bold;transform:scaleX(0.9167);transform-origin:0 0;">TS</div>
<div class="a t" style="left:1357.00px;top:27.75px;font-size:9.3px;line-height:12.09px;color:#a9a9a9;transform:scaleX(0.9747);transform-origin:0 0;">regiao.service.ts</div>
<svg class="a" style="left:1436px;top:28px;" width="11" height="11" viewBox="0 0 11 11"><path d="M1 2.5h3.5l1.5 1.5-1.5 1.5h-3.5zM5.5 7h3.5l1.5 1.5-1.5 1.5h-3.5zM4 4.5v4h1.5" stroke="#ee9d28" stroke-width="1.1" fill="none"/></svg>
<div class="a t" style="left:1449.00px;top:27.75px;font-size:9.3px;line-height:12.09px;color:#a9a9a9;transform:scaleX(0.9424);transform-origin:0 0;">RegiaoService</div>
<svg class="a" style="left:1518px;top:28.5px;" width="10" height="11" viewBox="0 0 10 11"><path d="M5 0.8 L9.2 3 V8 L5 10.2 L0.8 8 V3 Z M0.8 3 L5 5.2 L9.2 3 M5 5.2 V10.2" stroke="#b180d7" stroke-width="1" fill="none"/></svg>
<div class="a t" style="left:1531.00px;top:27.75px;font-size:9.3px;line-height:12.09px;color:#a9a9a9;transform:scaleX(0.9783);transform-origin:0 0;">listRegioes</div>
<div class="a" style="left:1173.80px;top:234.43px;width:155.70px;height:13.70px;background:#3a3d41;border-radius:2px 2px 0 0"></div>
<div class="a" style="left:1152.50px;top:248.15px;width:220.50px;height:13.70px;background:#3a3d41;border-radius:0 2px 2px 2px"></div>
<div class="a" style="left:1151.50px;top:124.67px;width:1.00px;height:13.72px;background:#404040;"></div>
<div class="a" style="left:1151.50px;top:165.83px;width:1.00px;height:109.76px;background:#404040;"></div>
<div class="a" style="left:1162.02px;top:193.27px;width:1.00px;height:27.44px;background:#404040;"></div>
<div class="a" style="left:1162.02px;top:234.43px;width:1.00px;height:27.44px;background:#707070;"></div>
<div class="a" style="left:1154.80px;top:254.70px;width:1.00px;height:1.00px;background:#6a6a6a;"></div>
<div class="a" style="left:1160.31px;top:254.70px;width:1.00px;height:1.00px;background:#6a6a6a;"></div>
<div class="a" style="left:1165.82px;top:254.70px;width:1.00px;height:1.00px;background:#6a6a6a;"></div>
<div class="a" style="left:1171.33px;top:254.70px;width:1.00px;height:1.00px;background:#6a6a6a;"></div>
<div class="a" style="left:1204.39px;top:240.98px;width:1.00px;height:1.00px;background:#6a6a6a;"></div>
<div class="a" style="left:1226.43px;top:240.98px;width:1.00px;height:1.00px;background:#6a6a6a;"></div>
<div class="a" style="left:1237.45px;top:240.98px;width:1.00px;height:1.00px;background:#6a6a6a;"></div>
<div class="a" style="left:1209.90px;top:254.70px;width:1.00px;height:1.00px;background:#6a6a6a;"></div>
<div class="a t" style="left:1127.79px;top:42.35px;font:9.18px/13.7px 'Liberation Mono',monospace;color:#858585">1</div>
<div class="a t" style="left:1152.5px;top:42.35px;font:9.18px/13.7px 'Liberation Mono',monospace"><span style="color:#c586c0">import</span><span style="color:#d4d4d4"> </span><span style="color:#d4d4d4">{</span><span style="color:#9cdcfe"> HttpClient </span><span style="color:#d4d4d4">}</span><span style="color:#c586c0"> from </span><span style="color:#ce9178">'@angular/common/http'</span><span style="color:#d4d4d4">;</span></div>
<div class="a t" style="left:1127.79px;top:56.07px;font:9.18px/13.7px 'Liberation Mono',monospace;color:#858585">2</div>
<div class="a t" style="left:1152.5px;top:56.07px;font:9.18px/13.7px 'Liberation Mono',monospace"><span style="color:#c586c0">import</span><span style="color:#d4d4d4"> </span><span style="color:#d4d4d4">{</span><span style="color:#9cdcfe"> Injectable </span><span style="color:#d4d4d4">}</span><span style="color:#c586c0"> from </span><span style="color:#ce9178">'@angular/core'</span><span style="color:#d4d4d4">;</span></div>
<div class="a t" style="left:1127.79px;top:69.79px;font:9.18px/13.7px 'Liberation Mono',monospace;color:#858585">3</div>
<div class="a t" style="left:1152.5px;top:69.79px;font:9.18px/13.7px 'Liberation Mono',monospace"><span style="color:#c586c0">import</span><span style="color:#d4d4d4"> </span><span style="color:#d4d4d4">{</span><span style="color:#9cdcfe"> Observable </span><span style="color:#d4d4d4">}</span><span style="color:#c586c0"> from </span><span style="color:#ce9178">'rxjs'</span><span style="color:#d4d4d4">;</span></div>
<div class="a t" style="left:1127.79px;top:83.51px;font:9.18px/13.7px 'Liberation Mono',monospace;color:#858585">4</div>
<div class="a t" style="left:1152.5px;top:83.51px;font:9.18px/13.7px 'Liberation Mono',monospace"><span style="color:#c586c0">import</span><span style="color:#d4d4d4"> </span><span style="color:#d4d4d4">{</span><span style="color:#9cdcfe"> Regiao </span><span style="color:#d4d4d4">}</span><span style="color:#c586c0"> from </span><span style="color:#ce9178">'../model/regiao'</span><span style="color:#d4d4d4">;</span></div>
<div class="a t" style="left:1127.79px;top:97.23px;font:9.18px/13.7px 'Liberation Mono',monospace;color:#858585">5</div>
<div class="a t" style="left:1127.79px;top:110.95px;font:9.18px/13.7px 'Liberation Mono',monospace;color:#858585">6</div>
<div class="a t" style="left:1152.5px;top:110.95px;font:9.18px/13.7px 'Liberation Mono',monospace"><span style="color:#dcdcaa">@Injectable</span><span style="color:#d4d4d4">(</span><span style="color:#d4d4d4">{</span></div>
<div class="a t" style="left:1127.79px;top:124.67px;font:9.18px/13.7px 'Liberation Mono',monospace;color:#858585">7</div>
<div class="a t" style="left:1152.5px;top:124.67px;font:9.18px/13.7px 'Liberation Mono',monospace"><span style="color:#9cdcfe">  providedIn</span><span style="color:#d4d4d4">: </span><span style="color:#ce9178">'root'</span></div>
<div class="a t" style="left:1127.79px;top:138.39px;font:9.18px/13.7px 'Liberation Mono',monospace;color:#858585">8</div>
<div class="a t" style="left:1152.5px;top:138.39px;font:9.18px/13.7px 'Liberation Mono',monospace"><span style="color:#d4d4d4">}</span><span style="color:#d4d4d4">)</span></div>
<div class="a t" style="left:1127.79px;top:152.11px;font:9.18px/13.7px 'Liberation Mono',monospace;color:#858585">9</div>
<div class="a t" style="left:1152.5px;top:152.11px;font:9.18px/13.7px 'Liberation Mono',monospace"><span style="color:#c586c0">export</span><span style="color:#569cd6"> class </span><span style="color:#4ec9b0">RegiaoService</span><span style="color:#d4d4d4"> </span><span style="color:#d4d4d4">{</span></div>
<div class="a t" style="left:1122.28px;top:165.83px;font:9.18px/13.7px 'Liberation Mono',monospace;color:#858585">10</div>
<div class="a t" style="left:1122.28px;top:179.55px;font:9.18px/13.7px 'Liberation Mono',monospace;color:#858585">11</div>
<div class="a t" style="left:1152.5px;top:179.55px;font:9.18px/13.7px 'Liberation Mono',monospace"><span style="color:#569cd6">  constructor</span><span style="color:#d4d4d4">(</span></div>
<div class="a t" style="left:1122.28px;top:193.27px;font:9.18px/13.7px 'Liberation Mono',monospace;color:#858585">12</div>
<div class="a t" style="left:1152.5px;top:193.27px;font:9.18px/13.7px 'Liberation Mono',monospace"><span style="color:#569cd6">    private </span><span style="color:#9cdcfe">http</span><span style="color:#d4d4d4">:</span><span style="color:#4ec9b0">HttpClient</span><span style="color:#d4d4d4">)</span><span style="color:#d4d4d4"> </span><span style="color:#d4d4d4">{</span><span style="color:#d4d4d4"> </span><span style="color:#d4d4d4">}</span></div>
<div class="a t" style="left:1122.28px;top:206.99px;font:9.18px/13.7px 'Liberation Mono',monospace;color:#858585">13</div>
<div class="a t" style="left:1122.28px;top:220.71px;font:9.18px/13.7px 'Liberation Mono',monospace;color:#858585">14</div>
<div class="a t" style="left:1152.5px;top:220.71px;font:9.18px/13.7px 'Liberation Mono',monospace"><span style="color:#dcdcaa">  listRegioes</span><span style="color:#d4d4d4">()</span><span style="color:#d4d4d4">: </span><span style="color:#4ec9b0">Observable</span><span style="color:#d4d4d4">&lt;</span><span style="color:#4ec9b0">Regiao</span><span style="color:#d4d4d4">[]</span><span style="color:#d4d4d4">&gt;</span><span style="color:#d4d4d4">{</span></div>
<div class="a t" style="left:1122.28px;top:234.43px;font:9.18px/13.7px 'Liberation Mono',monospace;color:#858585">15</div>
<div class="a t" style="left:1152.5px;top:234.43px;font:9.18px/13.7px 'Liberation Mono',monospace"><span style="color:#569cd6">    const </span><span style="color:#9cdcfe">url</span><span style="color:#d4d4d4"> = </span><span style="color:#ce9178">'/api/regioes'</span><span style="color:#d4d4d4">;</span></div>
<div class="a t" style="left:1122.28px;top:248.15px;font:bold 9.18px/13.7px 'Liberation Mono',monospace;color:#c6c6c6">16</div>
<div class="a t" style="left:1152.5px;top:248.15px;font:9.18px/13.7px 'Liberation Mono',monospace"><span style="color:#c586c0">    return </span><span style="color:#569cd6">this</span><span style="color:#d4d4d4">.</span><span style="color:#9cdcfe">http</span><span style="color:#d4d4d4">.</span><span style="color:#dcdcaa">get</span><span style="color:#d4d4d4">&lt;</span><span style="color:#4ec9b0">Regiao</span><span style="color:#d4d4d4">[]</span><span style="color:#d4d4d4">&gt;</span><span style="color:#d4d4d4">(</span><span style="color:#9cdcfe">url</span><span style="color:#d4d4d4">)</span><span style="color:#d4d4d4">;</span></div>
<div class="a t" style="left:1122.28px;top:261.87px;font:9.18px/13.7px 'Liberation Mono',monospace;color:#858585">17</div>
<div class="a t" style="left:1152.5px;top:261.87px;font:9.18px/13.7px 'Liberation Mono',monospace"><span style="color:#d4d4d4">  </span><span style="color:#d4d4d4">}</span></div>
<div class="a t" style="left:1122.28px;top:275.59px;font:9.18px/13.7px 'Liberation Mono',monospace;color:#858585">18</div>
<div class="a t" style="left:1152.5px;top:275.59px;font:9.18px/13.7px 'Liberation Mono',monospace"><span style="color:#d4d4d4">}</span></div>
<div class="a t" style="left:1122.28px;top:289.31px;font:9.18px/13.7px 'Liberation Mono',monospace;color:#858585">19</div>
<div class="a" style="left:1829.60px;top:66.30px;width:96.50px;height:2.90px;background:#264f78;"></div>
<div class="a" style="left:1829.60px;top:65.18px;width:34.00px;height:1.80px;background:#3a6ea5;opacity:0.7"></div>
<div class="a" style="left:1830.00px;top:41.10px;width:5.10px;height:1.30px;background:#c586c0;opacity:0.6"></div>
<div class="a" style="left:1835.95px;top:41.10px;width:6.80px;height:1.30px;background:#9cdcfe;opacity:0.6"></div>
<div class="a" style="left:1843.60px;top:41.10px;width:11.90px;height:1.30px;background:#ce9178;opacity:0.6"></div>
<div class="a" style="left:1830.00px;top:42.82px;width:5.10px;height:1.30px;background:#c586c0;opacity:0.6"></div>
<div class="a" style="left:1835.95px;top:42.82px;width:6.80px;height:1.30px;background:#9cdcfe;opacity:0.6"></div>
<div class="a" style="left:1843.60px;top:42.82px;width:8.50px;height:1.30px;background:#ce9178;opacity:0.6"></div>
<div class="a" style="left:1830.00px;top:44.54px;width:5.10px;height:1.30px;background:#c586c0;opacity:0.6"></div>
<div class="a" style="left:1835.95px;top:44.54px;width:6.80px;height:1.30px;background:#9cdcfe;opacity:0.6"></div>
<div class="a" style="left:1843.60px;top:44.54px;width:5.10px;height:1.30px;background:#ce9178;opacity:0.6"></div>
<div class="a" style="left:1830.00px;top:46.26px;width:5.10px;height:1.30px;background:#c586c0;opacity:0.6"></div>
<div class="a" style="left:1835.95px;top:46.26px;width:4.25px;height:1.30px;background:#9cdcfe;opacity:0.6"></div>
<div class="a" style="left:1841.05px;top:46.26px;width:10.20px;height:1.30px;background:#ce9178;opacity:0.6"></div>
<div class="a" style="left:1830.00px;top:49.70px;width:9.35px;height:1.30px;background:#dcdcaa;opacity:0.6"></div>
<div class="a" style="left:1831.70px;top:51.42px;width:8.50px;height:1.30px;background:#9cdcfe;opacity:0.6"></div>
<div class="a" style="left:1841.90px;top:51.42px;width:5.10px;height:1.30px;background:#ce9178;opacity:0.6"></div>
<div class="a" style="left:1830.00px;top:53.14px;width:1.70px;height:1.30px;background:#d4d4d4;opacity:0.6"></div>
<div class="a" style="left:1830.00px;top:54.86px;width:5.10px;height:1.30px;background:#c586c0;opacity:0.6"></div>
<div class="a" style="left:1835.95px;top:54.86px;width:4.25px;height:1.30px;background:#569cd6;opacity:0.6"></div>
<div class="a" style="left:1841.05px;top:54.86px;width:11.05px;height:1.30px;background:#4ec9b0;opacity:0.6"></div>
<div class="a" style="left:1831.70px;top:58.30px;width:10.20px;height:1.30px;background:#569cd6;opacity:0.6"></div>
<div class="a" style="left:1833.40px;top:60.02px;width:5.95px;height:1.30px;background:#569cd6;opacity:0.6"></div>
<div class="a" style="left:1840.20px;top:60.02px;width:11.90px;height:1.30px;background:#4ec9b0;opacity:0.6"></div>
<div class="a" style="left:1831.70px;top:63.46px;width:10.20px;height:1.30px;background:#dcdcaa;opacity:0.6"></div>
<div class="a" style="left:1843.60px;top:63.46px;width:14.45px;height:1.30px;background:#4ec9b0;opacity:0.6"></div>
<div class="a" style="left:1833.40px;top:65.18px;width:4.25px;height:1.30px;background:#569cd6;opacity:0.6"></div>
<div class="a" style="left:1838.50px;top:65.18px;width:2.55px;height:1.30px;background:#9cdcfe;opacity:0.6"></div>
<div class="a" style="left:1843.60px;top:65.18px;width:11.90px;height:1.30px;background:#ce9178;opacity:0.6"></div>
<div class="a" style="left:1833.40px;top:66.90px;width:5.10px;height:1.30px;background:#c586c0;opacity:0.6"></div>
<div class="a" style="left:1839.35px;top:66.90px;width:21.25px;height:1.30px;background:#9cdcfe;opacity:0.6"></div>
<div class="a" style="left:1831.70px;top:68.62px;width:0.85px;height:1.30px;background:#d4d4d4;opacity:0.6"></div>
<div class="a" style="left:1830.00px;top:70.34px;width:0.85px;height:1.30px;background:#d4d4d4;opacity:0.6"></div>
<div class="a" style="left:1926.30px;top:41.50px;width:1.50px;height:276.00px;background:#2f2f2f;"></div>
<div class="a" style="left:1926.30px;top:41.50px;width:10.70px;height:1.20px;background:#2a2a2a;"></div>
<div class="a" style="left:1927.50px;top:42.50px;width:9.50px;height:106.00px;background:#242424;"></div>
<div class="a" style="left:1927.50px;top:148.30px;width:9.50px;height:1.60px;background:#5c5c5c;"></div>
<div class="a" style="left:1103.00px;top:317.00px;width:834.00px;height:1.00px;background:#414141;"></div>
<div class="a t" style="left:1116.90px;top:325.61px;font-size:8.3px;line-height:10.79px;color:#9d9d9d;transform:scaleX(0.8614);transform-origin:0 0;">PROBLEMAS</div>
<div class="a t" style="left:1178.00px;top:325.61px;font-size:8.3px;line-height:10.79px;color:#9d9d9d;transform:scaleX(0.9033);transform-origin:0 0;">SAÍDA</div>
<div class="a t" style="left:1217.00px;top:325.61px;font-size:8.3px;line-height:10.79px;color:#9d9d9d;transform:scaleX(0.8572);transform-origin:0 0;">CONSOLE DE DEPURAÇÃO</div>
<div class="a t" style="left:1327.80px;top:325.61px;font-size:8.3px;line-height:10.79px;color:#e7e7e7;transform:scaleX(0.8864);transform-origin:0 0;">TERMINAL</div>
<div class="a" style="left:1326.60px;top:337.60px;width:40.00px;height:1.40px;background:#e7e7e7;"></div>
<svg class="a" style="left:1796.5px;top:325px;" width="12" height="11" viewBox="0 0 12 11"><rect x="0.6" y="0.6" width="10.5" height="9.8" rx="1" stroke="#c5c5c5" stroke-width="0.9" fill="none"/><path d="M3.5 3 L6 5.5 L3.5 8" stroke="#c5c5c5" stroke-width="0.9" fill="none"/></svg>
<div class="a t" style="left:1811.00px;top:325.11px;font-size:8.3px;line-height:10.79px;color:#cccccc;transform:scaleX(0.9911);transform-origin:0 0;">node</div>
<svg class="a" style="left:1837px;top:325px;" width="10" height="10" viewBox="0 0 10 10"><path d="M4.8 0.5v9M0.3 5h9" stroke="#c5c5c5" stroke-width="1.1"/></svg>
<svg class="a" style="left:1851px;top:328.5px;" width="6" height="4" viewBox="0 0 6 4"><path d="M0.5 0.5L2.8 2.8L5.1 0.5" stroke="#c5c5c5" stroke-width="0.9" fill="none"/></svg>
<svg class="a" style="left:1865px;top:325px;" width="11" height="11" viewBox="0 0 11 11"><rect x="0.6" y="0.6" width="9.8" height="9.8" rx="1" stroke="#c5c5c5" stroke-width="1" fill="none"/><path d="M5.5 0.6v9.8" stroke="#c5c5c5" stroke-width="1"/></svg>
<svg class="a" style="left:1884px;top:324.5px;" width="9" height="11" viewBox="0 0 9 11"><path d="M0.5 2.3h8M3 2.3v-1.5h3v1.5M1.5 2.3l0.7 8h4.6l0.7-8M3.7 4v5M5.3 4v5" stroke="#c5c5c5" stroke-width="0.9" fill="none"/></svg>
<svg class="a" style="left:1903px;top:327px;" width="9" height="6" viewBox="0 0 9 6"><path d="M0.6 4.8L4.4 1L8.2 4.8" stroke="#c5c5c5" stroke-width="1.1" fill="none"/></svg>
<svg class="a" style="left:1919px;top:326px;" width="9" height="9" viewBox="0 0 9 9"><path d="M0.8 0.8L7.8 7.8M7.8 0.8L0.8 7.8" stroke="#c5c5c5" stroke-width="1.1"/></svg>
<div class="a t" style="left:1117.4px;top:357.50px;font:8.67px/13px 'Liberation Mono',monospace"><span style="color:#23d18b">  </span><span style="color:#cccccc">Browser application bundle generation complete.</span></div>
<div class="a t" style="left:1117.4px;top:383.50px;font:8.67px/13px 'Liberation Mono',monospace"><span style="color:#e5e5e5;font-weight:bold">Initial Chunk Files                          </span><span style="color:#cccccc">| </span><span style="color:#e5e5e5;font-weight:bold">Names                         </span><span style="color:#cccccc"> |  </span><span style="color:#e5e5e5;font-weight:bold">Raw Size</span></div>
<div class="a t" style="left:1117.4px;top:396.50px;font:8.67px/13px 'Liberation Mono',monospace"><span style="color:#23d18b">vendor.js                                    </span><span style="color:#cccccc">| </span><span style="color:#cccccc">vendor                        </span><span style="color:#cccccc"> | </span><span style="color:#29b8db">  2.47 MB</span><span style="color:#cccccc"> |</span></div>
<div class="a t" style="left:1117.4px;top:409.50px;font:8.67px/13px 'Liberation Mono',monospace"><span style="color:#23d18b">polyfills.js                                 </span><span style="color:#cccccc">| </span><span style="color:#cccccc">polyfills                     </span><span style="color:#cccccc"> | </span><span style="color:#29b8db">294.85 kB</span><span style="color:#cccccc"> |</span></div>
<div class="a t" style="left:1117.4px;top:422.50px;font:8.67px/13px 'Liberation Mono',monospace"><span style="color:#23d18b">styles.css, styles.js                        </span><span style="color:#cccccc">| </span><span style="color:#cccccc">styles                        </span><span style="color:#cccccc"> | </span><span style="color:#29b8db">250.81 kB</span><span style="color:#cccccc"> |</span></div>
<div class="a t" style="left:1117.4px;top:435.50px;font:8.67px/13px 'Liberation Mono',monospace"><span style="color:#23d18b">runtime.js                                   </span><span style="color:#cccccc">| </span><span style="color:#cccccc">runtime                       </span><span style="color:#cccccc"> | </span><span style="color:#29b8db"> 12.64 kB</span><span style="color:#cccccc"> |</span></div>
<div class="a t" style="left:1117.4px;top:448.50px;font:8.67px/13px 'Liberation Mono',monospace"><span style="color:#23d18b">main.js                                      </span><span style="color:#cccccc">| </span><span style="color:#cccccc">main                          </span><span style="color:#cccccc"> | </span><span style="color:#29b8db">  9.00 kB</span><span style="color:#cccccc"> |</span></div>
<div class="a t" style="left:1117.4px;top:474.50px;font:8.67px/13px 'Liberation Mono',monospace"><span style="color:#cccccc">                                             </span><span style="color:#cccccc">| </span><span style="color:#e5e5e5;font-weight:bold">Initial Total                 </span><span style="color:#cccccc"> | </span><span style="color:#e5e5e5;font-weight:bold">  3.03 MB</span></div>
<div class="a t" style="left:1117.4px;top:500.50px;font:8.67px/13px 'Liberation Mono',monospace"><span style="color:#e5e5e5;font-weight:bold">Lazy Chunk Files                             </span><span style="color:#cccccc">| </span><span style="color:#e5e5e5;font-weight:bold">Names                         </span><span style="color:#cccccc"> |  </span><span style="color:#e5e5e5;font-weight:bold">Raw Size</span></div>
<div class="a t" style="left:1117.4px;top:513.50px;font:8.67px/13px 'Liberation Mono',monospace"><span style="color:#23d18b">src_app_ocorrencias_ocorrencias_module_ts.js </span><span style="color:#cccccc">| </span><span style="color:#cccccc">ocorrencias-ocorrencias-module</span><span style="color:#cccccc"> | </span><span style="color:#29b8db">486.43 kB</span><span style="color:#cccccc"> |</span></div>
<div class="a t" style="left:1117.4px;top:539.50px;font:8.67px/13px 'Liberation Mono',monospace"><span style="color:#cccccc">Build at: </span><span style="color:#e5e5e5;font-weight:bold">2022-03-23T00:51:50.384Z</span><span style="color:#cccccc"> - Hash: </span><span style="color:#e5e5e5;font-weight:bold">5f77f41079d69b3f</span><span style="color:#cccccc"> - Time: </span><span style="color:#e5e5e5;font-weight:bold">9766</span><span style="color:#cccccc">ms</span></div>
<div class="a" style="left:1102.00px;top:326.00px;width:1.00px;height:18.00px;background:#2d6bb3;"></div>
<svg class="a" style="left:1117.5px;top:357px;" width="8" height="8" viewBox="0 0 8 8"><path d="M0.8 4.2 L2.8 7 L7.2 0.6" stroke="#23d18b" stroke-width="1.4" fill="none"/></svg>
<div class="a" style="left:1028.00px;top:553.00px;width:2.00px;height:479.00px;background:#1f1f1f;"></div>
<div class="a" style="left:1030.00px;top:553.00px;width:938.00px;height:562.00px;background:#ffffff;"></div>
<div class="a" style="left:1030.00px;top:553.00px;width:938.00px;height:22.00px;background:#35363a;"></div>
<svg class="a" style="left:1038.5px;top:559px;" width="10" height="10" viewBox="0 0 10 10"><path d="M9.5 5H1.5M5 1.2L1.2 5L5 8.8" stroke="#f1f3f4" stroke-width="1.3" fill="none"/></svg>
<svg class="a" style="left:1058.5px;top:559px;" width="10" height="10" viewBox="0 0 10 10"><path d="M0.5 5H8.5M5 1.2L8.8 5L5 8.8" stroke="#8a8b8d" stroke-width="1.3" fill="none"/></svg>
<svg class="a" style="left:1078.5px;top:559px;" width="10" height="10" viewBox="0 0 10 10"><path d="M8.3 3.2A4 4 0 1 0 8.8 6" stroke="#f1f3f4" stroke-width="1.3" fill="none"/><path d="M9.3 0.5V4H5.8Z" fill="#f1f3f4"/></svg>
<div class="a" style="left:1097.60px;top:555.00px;width:880.00px;height:17.40px;background:#202124;border-radius:9px"></div>
<svg class="a" style="left:1103.5px;top:559px;" width="10" height="10" viewBox="0 0 10 10"><circle cx="4.8" cy="4.8" r="4.2" stroke="#bdc1c6" stroke-width="0.9" fill="none"/><path d="M4.8 4v3.3M4.8 2.3v1" stroke="#bdc1c6" stroke-width="1"/></svg>
<div class="a t" style="left:1118.00px;top:557.56px;font-size:9.6px;line-height:12.48px;color:#e8eaed;transform:scaleX(0.9237);transform-origin:0 0;">localhost</div>
<div class="a t" style="left:1153.00px;top:557.56px;font-size:9.6px;line-height:12.48px;color:#9aa0a6;transform:scaleX(0.8858);transform-origin:0 0;">:4200/ocorrencias</div>
<div class="a" style="left:1030.00px;top:575.00px;width:938.00px;height:40.00px;background:#3f51b5;"></div>
<div class="a t" style="left:1040.20px;top:586.65px;font-size:13.3px;line-height:17.29px;color:#ffffff;font-weight:bold;transform:scaleX(0.8632);transform-origin:0 0;">Sistema de consulta DATASUS</div>
<div class="a" style="left:1090.00px;top:622.70px;width:900.00px;height:87.60px;background:#ffffff;box-shadow:0 1px 1.5px rgba(0,0,0,0.12),0 0 1px rgba(0,0,0,0.08);border-radius:2px"></div>
<div class="a" style="left:1090.00px;top:711.00px;width:900.00px;height:132.00px;background:#ffffff;box-shadow:0 1px 1.5px rgba(0,0,0,0.12),0 0 1px rgba(0,0,0,0.08);border-radius:2px"></div>
<div class="a" style="left:1090.00px;top:843.50px;width:900.00px;height:267.00px;background:#ffffff;box-shadow:0 1px 1.5px rgba(0,0,0,0.12),0 0 1px rgba(0,0,0,0.08);border-radius:2px"></div>
<div class="a t" style="left:1099.70px;top:632.16px;font-size:9.3px;line-height:12.09px;color:#969696;transform:scaleX(0.9296);transform-origin:0 0;">Exames de mamografia entre Junho e Julho de 2015</div>
<div class="a t" style="left:1099.70px;top:720.06px;font-size:9.3px;line-height:12.09px;color:#969696;transform:scaleX(0.9094);transform-origin:0 0;">Relação de Regiões Brasileiras</div>
<div class="a t" style="left:1099.70px;top:853.16px;font-size:9.3px;line-height:12.09px;color:#969696;transform:scaleX(0.9218);transform-origin:0 0;">Faixa Etaria das mulheres que realizaram os exames</div>
<div class="a t" style="left:1101.60px;top:657.01px;font-size:8.6px;line-height:11.18px;color:#222222;font-weight:bold;transform:scaleX(0.9300);transform-origin:0 0;">ID</div>
<div class="a t" style="left:1194.80px;top:657.01px;font-size:8.6px;line-height:11.18px;color:#222222;font-weight:bold;transform:scaleX(0.9300);transform-origin:0 0;">ID Região</div>
<div class="a t" style="left:1418.60px;top:657.01px;font-size:8.6px;line-height:11.18px;color:#222222;font-weight:bold;transform:scaleX(0.9300);transform-origin:0 0;">Mês</div>
<div class="a t" style="left:1550.40px;top:657.01px;font-size:8.6px;line-height:11.18px;color:#222222;font-weight:bold;transform:scaleX(0.9300);transform-origin:0 0;">ID Faixa Etaria</div>
<div class="a t" style="left:1856.20px;top:657.01px;font-size:8.6px;line-height:11.18px;color:#222222;font-weight:bold;transform:scaleX(0.9300);transform-origin:0 0;">N° de exames</div>
<div class="a t" style="left:1101.60px;top:671.09px;font-size:9.4px;line-height:12.22px;color:#4a4a4a;transform:scaleX(0.9042);transform-origin:0 0;">1</div>
<div class="a t" style="left:1194.80px;top:671.09px;font-size:9.4px;line-height:12.22px;color:#4a4a4a;transform:scaleX(0.9042);transform-origin:0 0;">1</div>
<div class="a t" style="left:1418.60px;top:671.09px;font-size:9.4px;line-height:12.22px;color:#4a4a4a;transform:scaleX(0.9042);transform-origin:0 0;">5</div>
<div class="a t" style="left:1550.40px;top:671.09px;font-size:9.4px;line-height:12.22px;color:#4a4a4a;transform:scaleX(0.9042);transform-origin:0 0;">2</div>
<div class="a t" style="left:1856.20px;top:671.09px;font-size:9.4px;line-height:12.22px;color:#4a4a4a;transform:scaleX(0.9042);transform-origin:0 0;">1</div>
<div class="a t" style="left:1101.60px;top:686.09px;font-size:9.4px;line-height:12.22px;color:#4a4a4a;transform:scaleX(0.9042);transform-origin:0 0;">2</div>
<div class="a t" style="left:1194.80px;top:686.09px;font-size:9.4px;line-height:12.22px;color:#4a4a4a;transform:scaleX(0.9042);transform-origin:0 0;">1</div>
<div class="a t" style="left:1418.60px;top:686.09px;font-size:9.4px;line-height:12.22px;color:#4a4a4a;transform:scaleX(0.9042);transform-origin:0 0;">5</div>
<div class="a t" style="left:1550.40px;top:686.09px;font-size:9.4px;line-height:12.22px;color:#4a4a4a;transform:scaleX(0.9042);transform-origin:0 0;">4</div>
<div class="a t" style="left:1856.20px;top:686.09px;font-size:9.4px;line-height:12.22px;color:#4a4a4a;transform:scaleX(0.9042);transform-origin:0 0;">2</div>
<div class="a t" style="left:1101.60px;top:744.91px;font-size:8.6px;line-height:11.18px;color:#222222;font-weight:bold;transform:scaleX(0.9300);transform-origin:0 0;">ID</div>
<div class="a t" style="left:1272.40px;top:744.91px;font-size:8.6px;line-height:11.18px;color:#222222;font-weight:bold;transform:scaleX(0.9300);transform-origin:0 0;">Região</div>
<div class="a t" style="left:1701.70px;top:744.91px;font-size:8.6px;line-height:11.18px;color:#222222;font-weight:bold;transform:scaleX(0.9300);transform-origin:0 0;">N° Exames</div>
<div class="a t" style="left:1101.60px;top:759.39px;font-size:9.4px;line-height:12.22px;color:#4a4a4a;transform:scaleX(0.9042);transform-origin:0 0;">1</div>
<div class="a t" style="left:1272.40px;top:759.39px;font-size:9.4px;line-height:12.22px;color:#4a4a4a;transform:scaleX(0.9042);transform-origin:0 0;">Norte</div>
<div class="a t" style="left:1701.70px;top:759.39px;font-size:9.4px;line-height:12.22px;color:#4a4a4a;transform:scaleX(0.9042);transform-origin:0 0;">44</div>
<div class="a t" style="left:1101.60px;top:774.29px;font-size:9.4px;line-height:12.22px;color:#4a4a4a;transform:scaleX(0.9042);transform-origin:0 0;">2</div>
<div class="a t" style="left:1272.40px;top:774.29px;font-size:9.4px;line-height:12.22px;color:#4a4a4a;transform:scaleX(0.9042);transform-origin:0 0;">Nordeste</div>
<div class="a t" style="left:1701.70px;top:774.29px;font-size:9.4px;line-height:12.22px;color:#4a4a4a;transform:scaleX(0.9042);transform-origin:0 0;">13832</div>
<div class="a t" style="left:1101.60px;top:789.19px;font-size:9.4px;line-height:12.22px;color:#4a4a4a;transform:scaleX(0.9042);transform-origin:0 0;">3</div>
<div class="a t" style="left:1272.40px;top:789.19px;font-size:9.4px;line-height:12.22px;color:#4a4a4a;transform:scaleX(0.9042);transform-origin:0 0;">Sudeste</div>
<div class="a t" style="left:1701.70px;top:789.19px;font-size:9.4px;line-height:12.22px;color:#4a4a4a;transform:scaleX(0.9042);transform-origin:0 0;">89657</div>
<div class="a t" style="left:1101.60px;top:804.09px;font-size:9.4px;line-height:12.22px;color:#4a4a4a;transform:scaleX(0.9042);transform-origin:0 0;">4</div>
<div class="a t" style="left:1272.40px;top:804.09px;font-size:9.4px;line-height:12.22px;color:#4a4a4a;transform:scaleX(0.9042);transform-origin:0 0;">Sul</div>
<div class="a t" style="left:1701.70px;top:804.09px;font-size:9.4px;line-height:12.22px;color:#4a4a4a;transform:scaleX(0.9042);transform-origin:0 0;">122</div>
<div class="a t" style="left:1101.60px;top:818.99px;font-size:9.4px;line-height:12.22px;color:#4a4a4a;transform:scaleX(0.9042);transform-origin:0 0;">5</div>
<div class="a t" style="left:1272.40px;top:818.99px;font-size:9.4px;line-height:12.22px;color:#4a4a4a;transform:scaleX(0.9042);transform-origin:0 0;">Centro-Oeste</div>
<div class="a t" style="left:1701.70px;top:818.99px;font-size:9.4px;line-height:12.22px;color:#4a4a4a;transform:scaleX(0.9042);transform-origin:0 0;">2581</div>
<div class="a t" style="left:1101.60px;top:878.01px;font-size:8.6px;line-height:11.18px;color:#222222;font-weight:bold;transform:scaleX(0.9300);transform-origin:0 0;">ID</div>
<div class="a t" style="left:1208.50px;top:878.01px;font-size:8.6px;line-height:11.18px;color:#222222;font-weight:bold;transform:scaleX(0.9300);transform-origin:0 0;">Faixa inicial</div>
<div class="a t" style="left:1509.00px;top:878.01px;font-size:8.6px;line-height:11.18px;color:#222222;font-weight:bold;transform:scaleX(0.9300);transform-origin:0 0;">Faixa final</div>
<div class="a t" style="left:1778.00px;top:878.01px;font-size:8.6px;line-height:11.18px;color:#222222;font-weight:bold;transform:scaleX(0.9300);transform-origin:0 0;">Descrição</div>
<div class="a t" style="left:1101.60px;top:892.39px;font-size:9.4px;line-height:12.22px;color:#4a4a4a;transform:scaleX(0.9042);transform-origin:0 0;">1</div>
<div class="a t" style="left:1208.50px;top:892.39px;font-size:9.4px;line-height:12.22px;color:#4a4a4a;transform:scaleX(0.9042);transform-origin:0 0;">0</div>
<div class="a t" style="left:1509.00px;top:892.39px;font-size:9.4px;line-height:12.22px;color:#4a4a4a;transform:scaleX(0.9042);transform-origin:0 0;">10</div>
<div class="a t" style="left:1778.00px;top:892.39px;font-size:9.4px;line-height:12.22px;color:#4a4a4a;transform:scaleX(0.9042);transform-origin:0 0;">Até 10 anos</div>
<div class="a t" style="left:1101.60px;top:907.29px;font-size:9.4px;line-height:12.22px;color:#4a4a4a;transform:scaleX(0.9042);transform-origin:0 0;">2</div>
<div class="a t" style="left:1208.50px;top:907.29px;font-size:9.4px;line-height:12.22px;color:#4a4a4a;transform:scaleX(0.9042);transform-origin:0 0;">11</div>
<div class="a t" style="left:1509.00px;top:907.29px;font-size:9.4px;line-height:12.22px;color:#4a4a4a;transform:scaleX(0.9042);transform-origin:0 0;">14</div>
<div class="a t" style="left:1778.00px;top:907.29px;font-size:9.4px;line-height:12.22px;color:#4a4a4a;transform:scaleX(0.9042);transform-origin:0 0;">Entre 11 e 14 anos</div>
<div class="a t" style="left:1101.60px;top:922.19px;font-size:9.4px;line-height:12.22px;color:#4a4a4a;transform:scaleX(0.9042);transform-origin:0 0;">3</div>
<div class="a t" style="left:1208.50px;top:922.19px;font-size:9.4px;line-height:12.22px;color:#4a4a4a;transform:scaleX(0.9042);transform-origin:0 0;">15</div>
<div class="a t" style="left:1509.00px;top:922.19px;font-size:9.4px;line-height:12.22px;color:#4a4a4a;transform:scaleX(0.9042);transform-origin:0 0;">19</div>
<div class="a t" style="left:1778.00px;top:922.19px;font-size:9.4px;line-height:12.22px;color:#4a4a4a;transform:scaleX(0.9042);transform-origin:0 0;">Entre 15 e 19 anos</div>
<div class="a t" style="left:1101.60px;top:937.09px;font-size:9.4px;line-height:12.22px;color:#4a4a4a;transform:scaleX(0.9042);transform-origin:0 0;">4</div>
<div class="a t" style="left:1208.50px;top:937.09px;font-size:9.4px;line-height:12.22px;color:#4a4a4a;transform:scaleX(0.9042);transform-origin:0 0;">20</div>
<div class="a t" style="left:1509.00px;top:937.09px;font-size:9.4px;line-height:12.22px;color:#4a4a4a;transform:scaleX(0.9042);transform-origin:0 0;">24</div>
<div class="a t" style="left:1778.00px;top:937.09px;font-size:9.4px;line-height:12.22px;color:#4a4a4a;transform:scaleX(0.9042);transform-origin:0 0;">Entre 20 e 24 anos</div>
<div class="a t" style="left:1101.60px;top:951.99px;font-size:9.4px;line-height:12.22px;color:#4a4a4a;transform:scaleX(0.9042);transform-origin:0 0;">5</div>
<div class="a t" style="left:1208.50px;top:951.99px;font-size:9.4px;line-height:12.22px;color:#4a4a4a;transform:scaleX(0.9042);transform-origin:0 0;">25</div>
<div class="a t" style="left:1509.00px;top:951.99px;font-size:9.4px;line-height:12.22px;color:#4a4a4a;transform:scaleX(0.9042);transform-origin:0 0;">29</div>
<div class="a t" style="left:1778.00px;top:951.99px;font-size:9.4px;line-height:12.22px;color:#4a4a4a;transform:scaleX(0.9042);transform-origin:0 0;">Entre 25 e 29 anos</div>
<div class="a t" style="left:1101.60px;top:966.89px;font-size:9.4px;line-height:12.22px;color:#4a4a4a;transform:scaleX(0.9042);transform-origin:0 0;">6</div>
<div class="a t" style="left:1208.50px;top:966.89px;font-size:9.4px;line-height:12.22px;color:#4a4a4a;transform:scaleX(0.9042);transform-origin:0 0;">30</div>
<div class="a t" style="left:1509.00px;top:966.89px;font-size:9.4px;line-height:12.22px;color:#4a4a4a;transform:scaleX(0.9042);transform-origin:0 0;">34</div>
<div class="a t" style="left:1778.00px;top:966.89px;font-size:9.4px;line-height:12.22px;color:#4a4a4a;transform:scaleX(0.9042);transform-origin:0 0;">Entre 30 e 34 anos</div>
<div class="a t" style="left:1101.60px;top:981.79px;font-size:9.4px;line-height:12.22px;color:#4a4a4a;transform:scaleX(0.9042);transform-origin:0 0;">7</div>
<div class="a t" style="left:1208.50px;top:981.79px;font-size:9.4px;line-height:12.22px;color:#4a4a4a;transform:scaleX(0.9042);transform-origin:0 0;">35</div>
<div class="a t" style="left:1509.00px;top:981.79px;font-size:9.4px;line-height:12.22px;color:#4a4a4a;transform:scaleX(0.9042);transform-origin:0 0;">39</div>
<div class="a t" style="left:1778.00px;top:981.79px;font-size:9.4px;line-height:12.22px;color:#4a4a4a;transform:scaleX(0.9042);transform-origin:0 0;">Entre 35 e 39 anos</div>
<div class="a t" style="left:1101.60px;top:996.69px;font-size:9.4px;line-height:12.22px;color:#4a4a4a;transform:scaleX(0.9042);transform-origin:0 0;">8</div>
<div class="a t" style="left:1208.50px;top:996.69px;font-size:9.4px;line-height:12.22px;color:#4a4a4a;transform:scaleX(0.9042);transform-origin:0 0;">40</div>
<div class="a t" style="left:1509.00px;top:996.69px;font-size:9.4px;line-height:12.22px;color:#4a4a4a;transform:scaleX(0.9042);transform-origin:0 0;">44</div>
<div class="a t" style="left:1778.00px;top:996.69px;font-size:9.4px;line-height:12.22px;color:#4a4a4a;transform:scaleX(0.9042);transform-origin:0 0;">Entre 40 e 44 anos</div>
<div class="a t" style="left:1101.60px;top:1011.59px;font-size:9.4px;line-height:12.22px;color:#4a4a4a;transform:scaleX(0.9042);transform-origin:0 0;">9</div>
<div class="a t" style="left:1208.50px;top:1011.59px;font-size:9.4px;line-height:12.22px;color:#4a4a4a;transform:scaleX(0.9042);transform-origin:0 0;">45</div>
<div class="a t" style="left:1509.00px;top:1011.59px;font-size:9.4px;line-height:12.22px;color:#4a4a4a;transform:scaleX(0.9042);transform-origin:0 0;">49</div>
<div class="a t" style="left:1778.00px;top:1011.59px;font-size:9.4px;line-height:12.22px;color:#4a4a4a;transform:scaleX(0.9042);transform-origin:0 0;">Entre 45 e 49 anos</div>
<div class="a t" style="left:1101.60px;top:1026.49px;font-size:9.4px;line-height:12.22px;color:#4a4a4a;transform:scaleX(0.9042);transform-origin:0 0;">10</div>
<div class="a t" style="left:1208.50px;top:1026.49px;font-size:9.4px;line-height:12.22px;color:#4a4a4a;transform:scaleX(0.9042);transform-origin:0 0;">50</div>
<div class="a t" style="left:1509.00px;top:1026.49px;font-size:9.4px;line-height:12.22px;color:#4a4a4a;transform:scaleX(0.9042);transform-origin:0 0;">54</div>
<div class="a t" style="left:1778.00px;top:1026.49px;font-size:9.4px;line-height:12.22px;color:#4a4a4a;transform:scaleX(0.9042);transform-origin:0 0;">Entre 50 e 54 anos</div>
<div class="a t" style="left:1101.60px;top:1041.39px;font-size:9.4px;line-height:12.22px;color:#4a4a4a;transform:scaleX(0.9042);transform-origin:0 0;">11</div>
<div class="a t" style="left:1208.50px;top:1041.39px;font-size:9.4px;line-height:12.22px;color:#4a4a4a;transform:scaleX(0.9042);transform-origin:0 0;">55</div>
<div class="a t" style="left:1509.00px;top:1041.39px;font-size:9.4px;line-height:12.22px;color:#4a4a4a;transform:scaleX(0.9042);transform-origin:0 0;">59</div>
<div class="a t" style="left:1778.00px;top:1041.39px;font-size:9.4px;line-height:12.22px;color:#4a4a4a;transform:scaleX(0.9042);transform-origin:0 0;">Entre 55 e 59 anos</div>
<div class="a t" style="left:1101.60px;top:1056.29px;font-size:9.4px;line-height:12.22px;color:#4a4a4a;transform:scaleX(0.9042);transform-origin:0 0;">12</div>
<div class="a t" style="left:1208.50px;top:1056.29px;font-size:9.4px;line-height:12.22px;color:#4a4a4a;transform:scaleX(0.9042);transform-origin:0 0;">60</div>
<div class="a t" style="left:1509.00px;top:1056.29px;font-size:9.4px;line-height:12.22px;color:#4a4a4a;transform:scaleX(0.9042);transform-origin:0 0;">64</div>
<div class="a t" style="left:1778.00px;top:1056.29px;font-size:9.4px;line-height:12.22px;color:#4a4a4a;transform:scaleX(0.9042);transform-origin:0 0;">Entre 60 e 64 anos</div>
<div class="a t" style="left:1101.60px;top:1071.19px;font-size:9.4px;line-height:12.22px;color:#4a4a4a;transform:scaleX(0.9042);transform-origin:0 0;">13</div>
<div class="a t" style="left:1208.50px;top:1071.19px;font-size:9.4px;line-height:12.22px;color:#4a4a4a;transform:scaleX(0.9042);transform-origin:0 0;">65</div>
<div class="a t" style="left:1509.00px;top:1071.19px;font-size:9.4px;line-height:12.22px;color:#4a4a4a;transform:scaleX(0.9042);transform-origin:0 0;">69</div>
<div class="a t" style="left:1778.00px;top:1071.19px;font-size:9.4px;line-height:12.22px;color:#4a4a4a;transform:scaleX(0.9042);transform-origin:0 0;">Entre 65 e 69 anos</div>
<div class="a t" style="left:1101.60px;top:1086.09px;font-size:9.4px;line-height:12.22px;color:#4a4a4a;transform:scaleX(0.9042);transform-origin:0 0;">14</div>
<div class="a t" style="left:1208.50px;top:1086.09px;font-size:9.4px;line-height:12.22px;color:#4a4a4a;transform:scaleX(0.9042);transform-origin:0 0;">70</div>
<div class="a t" style="left:1509.00px;top:1086.09px;font-size:9.4px;line-height:12.22px;color:#4a4a4a;transform:scaleX(0.9042);transform-origin:0 0;">150</div>
<div class="a t" style="left:1778.00px;top:1086.09px;font-size:9.4px;line-height:12.22px;color:#4a4a4a;transform:scaleX(0.9042);transform-origin:0 0;">Acima de 70</div>
<svg class="a" style="left:1883px;top:1049px;" width="5" height="4" viewBox="0 0 5 4"><ellipse cx="2.3" cy="2" rx="1.5" ry="1" fill="#2020ff" transform="rotate(-25 2.3 2)"/></svg>
</body></html>
